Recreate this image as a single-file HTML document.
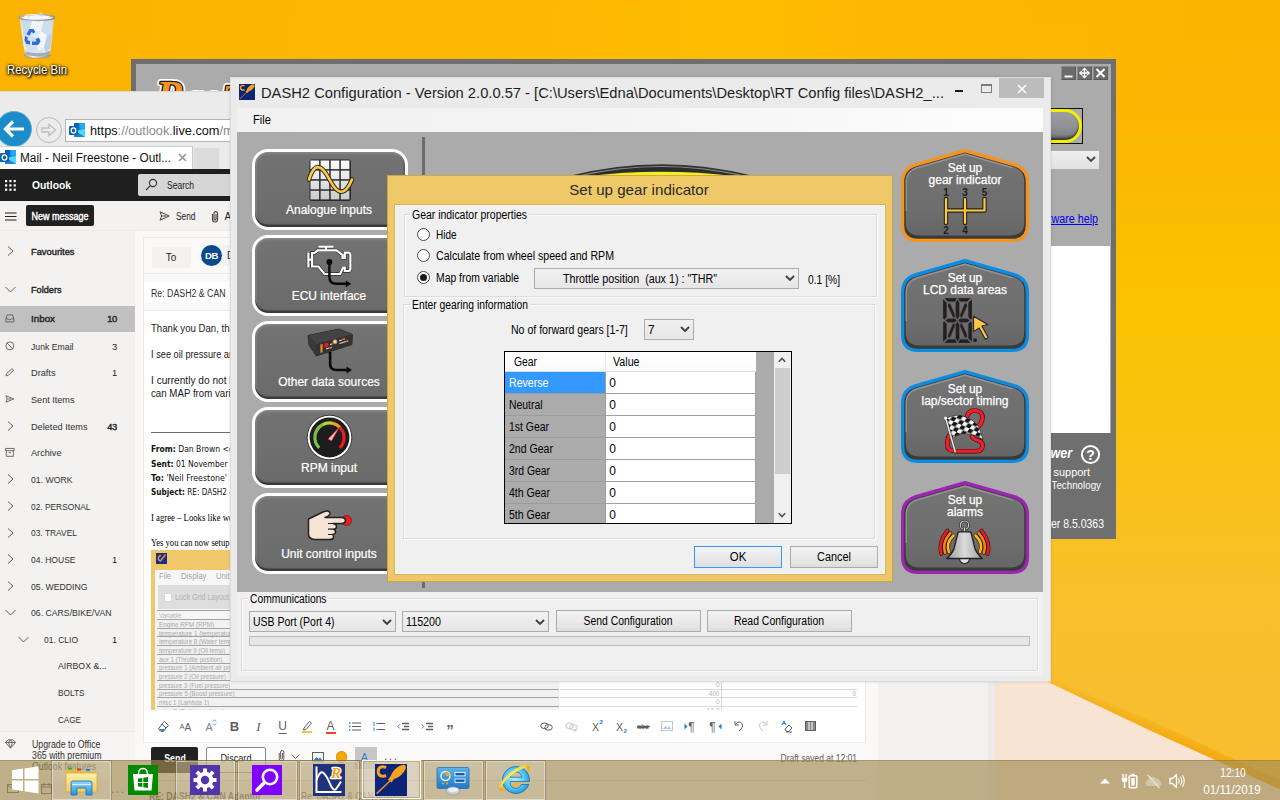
<!DOCTYPE html>
<html lang="en"><head><meta charset="utf-8"><title>Desktop</title>
<style>
*{box-sizing:border-box;margin:0;padding:0}
html,body{width:1280px;height:800px;overflow:hidden}
body{position:relative;font-family:"Liberation Sans",sans-serif;background:#fdb70a;font-size:12px}
.a{position:absolute}
.t{position:absolute;white-space:pre;line-height:1}
svg{position:absolute;overflow:visible}
.ser{font-family:"Liberation Serif",serif}
</style></head>
<body>

<svg style="left:0;top:0" width="1280" height="800" viewBox="0 0 1280 800">
<defs>
<linearGradient id="wg" x1="0" y1="0" x2="0" y2="800" gradientUnits="userSpaceOnUse">
<stop offset="0" stop-color="#fcb400"/><stop offset="0.12" stop-color="#fcb502"/><stop offset="0.38" stop-color="#fac200"/>
<stop offset="0.56" stop-color="#fac213"/><stop offset="0.75" stop-color="#f8c02b"/><stop offset="1" stop-color="#f7bd30"/>
</linearGradient>
<linearGradient id="wb" x1="1150" y1="718" x2="1145" y2="731" gradientUnits="userSpaceOnUse">
<stop offset="0" stop-color="#f7bb2c"/><stop offset="0.45" stop-color="#f5b21b"/><stop offset="1" stop-color="#f3a912"/>
</linearGradient>
<linearGradient id="wh" x1="0" y1="0" x2="1280" y2="0" gradientUnits="userSpaceOnUse">
<stop offset="0" stop-color="#f9af00" stop-opacity=".5"/><stop offset=".3" stop-color="#ffbe00" stop-opacity=".35"/><stop offset=".58" stop-color="#ffc000" stop-opacity=".7"/><stop offset=".85" stop-color="#ffbc00" stop-opacity=".2"/><stop offset="1" stop-color="#fbb400" stop-opacity="0"/>
</linearGradient>
</defs>
<rect width="1280" height="800" fill="url(#wg)"/>
<rect width="1280" height="95" fill="url(#wh)"/>
<polygon points="900,612.5 1050,677 1150,720 1236,760 1280,780.5 1280,789.5 1215,760 1150,730.6 1050,683 900,612.5" fill="url(#wb)"/>
<polygon points="900,612.5 1050,683 1150,730.6 1215,760 1280,789.5 1280,800 900,800" fill="#f7e4d2"/>
</svg>
<svg style="left:17px;top:9px" width="40" height="50" viewBox="0 0 40 50">
<defs><linearGradient id="rbm" x1="0" y1="0" x2="1" y2="0"><stop offset="0" stop-color="#9aa0a6"/><stop offset=".35" stop-color="#f4f6f8"/><stop offset=".6" stop-color="#c2c7cc"/><stop offset="1" stop-color="#8d9399"/></linearGradient>
<linearGradient id="rbg" x1="0" y1="0" x2="1" y2="0"><stop offset="0" stop-color="#e8c36a" stop-opacity=".75"/><stop offset=".12" stop-color="#dfe9f3" stop-opacity=".9"/><stop offset=".88" stop-color="#d5e2ef" stop-opacity=".9"/><stop offset="1" stop-color="#e8c36a" stop-opacity=".75"/></linearGradient></defs>
<ellipse cx="20.5" cy="46" rx="13" ry="3.3" fill="url(#rbm)" stroke="#8a9096" stroke-width=".6"/>
<path d="M2 8.5 L8 45.3 Q20.5 49.5 33.2 45.3 L37.8 8.5Z" fill="url(#rbg)"/>
<path d="M8.2 42 Q20.5 46.5 33 42 L33.2 45.3 Q20.5 49.5 8 45.3Z" fill="#9ea4aa" opacity=".85"/>
<path d="M4.5 10 L35.5 10 L33.5 38 L29 43.5 L11 43 L6.8 38Z" fill="#dde9f5"/>
<path d="M5 11 L15 12 L12 24 L6.5 30Z" fill="#c9daeb"/><path d="M15 12 L27 11 L24 22 L12 24Z" fill="#eef4fa"/><path d="M27 11 L35.5 10 L34.5 24 L30 27 L24 22Z" fill="#cfdff0"/>
<path d="M24 22 L30 27 L27 38 L21 42 L19 30Z" fill="#f3f7fb"/><path d="M30 27 L34.5 24 L33.5 38 L29 43.5 L27 38Z" fill="#bcd0e6"/><path d="M6.5 30 L12 24 L19 30 L21 42 L11 43 L6.8 38Z" fill="#d3e1f0"/>
<path d="M4.5 9 L7 7.5 L10 5.3 L13 7 L17 6.3 L22 5 L24.6 3.5 L26 6 L30 6.5 L34 8 L36 9.5 L20 11.5Z" fill="#f2f7fc"/>
<path d="M10 5.3 L13 7 L11.5 9.5Z M22 5 L24.6 3.5 L25 8Z" fill="#cfdcea"/>
<ellipse cx="19.9" cy="8.55" rx="17.9" ry="2.9" fill="none" stroke="url(#rbm)" stroke-width="1.4"/>
<path d="M2 8.5 A17.9 2.9 0 0 0 37.8 8.5" fill="none" stroke="#7d838a" stroke-width=".9" opacity=".8"/>
<g fill="#2f6ddb"><path d="M9.5 25 L12.5 20 L16.5 20 L18.5 23 L16 24.5 L14.8 22.8 L12.3 26.8Z"/><path d="M8.3 27 L11.3 28.7 L10 31 L13 32 L13 35.5 L9.3 35 L7.3 31Z"/><path d="M15 36 L15 32.5 L19.5 32.5 L18.5 30 L22 28.5 L23.5 32.5 L21 36Z"/></g>
<path d="M3.3 10 L9 44" stroke="#fff" stroke-width=".8" opacity=".55"/>
</svg><span class="t" id="t1" style="top:64.1px;font-size:12px;color:#fff;left:37px;transform:translateX(-50%) scaleX(0.947);text-shadow:1px 1px 2px #000,0 0 3px #000,0 1px 3px rgba(0,0,0,.9);letter-spacing:0px;">Recycle Bin</span><div class="a" style="left:131px;top:59px;width:985px;height:480px;background:#ababab;border:5px solid #6f6f6f;"></div><div class="a" style="left:136px;top:433px;width:975px;height:101px;background:#6f6f6f;"></div><div class="a" style="left:1040px;top:246px;width:70px;height:187px;background:#fff;"></div><svg style="left:150px;top:70px" width="90" height="50" viewBox="0 0 90 50"><g font-family="Liberation Serif,serif" font-style="italic" font-weight="bold" font-size="42"><text x="6" y="40" stroke="#fff" stroke-width="6" stroke-linejoin="round" fill="#fff">R</text><text x="6" y="40" stroke="#1a1a1a" stroke-width="2.6" stroke-linejoin="round" fill="#1a1a1a">R</text><text x="6" y="40" fill="#f7941d">R</text></g><g font-family="Liberation Serif,serif" font-style="italic" font-weight="bold" font-size="36"><text x="35" y="39.5" stroke="#fff" stroke-width="6" stroke-linejoin="round" fill="#fff">ace</text><text x="35" y="39.5" stroke="#1a1a1a" stroke-width="2.6" stroke-linejoin="round" fill="#1a1a1a">ace</text><text x="35" y="39.5" fill="#f7941d">ace</text></g><g font-family="Liberation Serif,serif" font-style="italic" font-weight="bold" font-size="42"><text x="72" y="44" stroke="#fff" stroke-width="6" stroke-linejoin="round" fill="#fff">T</text><text x="72" y="44" stroke="#1a1a1a" stroke-width="2.6" stroke-linejoin="round" fill="#1a1a1a">T</text><text x="72" y="44" fill="#f7941d">T</text></g></svg><div class="a" style="left:1061px;top:66px;width:15px;height:14px;background:#6b6b6b;border:1px solid #5a5a5a;border-top-color:#8a8a8a;border-left-color:#8a8a8a;"></div><div class="a" style="left:1077px;top:66px;width:15px;height:14px;background:#6b6b6b;border:1px solid #5a5a5a;border-top-color:#8a8a8a;border-left-color:#8a8a8a;"></div><div class="a" style="left:1093px;top:66px;width:15px;height:14px;background:#6b6b6b;border:1px solid #5a5a5a;border-top-color:#8a8a8a;border-left-color:#8a8a8a;"></div><svg style="left:1061px;top:66px" width="47" height="14" viewBox="0 0 47 14" fill="none" stroke="#fff" stroke-width="2">
<path d="M3.5 10.5 h8"/>
<path d="M23.5 2.5 v9 M19 7 h9" stroke-width="1.4"/><path d="M21.5 4.5 l2 -2.2 l2 2.2 M21.5 9.5 l2 2.2 l2 -2.2 M21 5 l-2.2 2 l2.2 2 M26 5 l2.2 2 l-2.2 2" stroke-width="1.2"/>
<path d="M35.5 3 l8 8 M43.5 3 l-8 8"/></svg><div class="a" style="left:1000px;top:108px;width:83px;height:36px;background:#ababab;border:1px solid #111;"></div><div class="a" style="left:980px;top:109px;width:101.5px;height:33.5px;border-radius:17px;border:3px solid #f5ee00;background:linear-gradient(#9b9da0,#8f9194 55%,#808285 80%,#55575a);box-shadow:inset 0 -2px 2px #3a3a3a;"></div><div class="a" style="left:1000px;top:150px;width:99.5px;height:19.5px;background:#e1e1e1;border:1px solid #adadad;background:linear-gradient(#efefef,#e2e2e2);"></div><svg style="left:1086px;top:156px" width="10" height="7" viewBox="0 0 10 7" fill="none" stroke="#444" stroke-width="1.8"><path d="M1 1 l4 4 l4 -4"/></svg><span class="t" id="t2" style="top:213.4px;font-size:12px;color:#0000ee;left:1097.8px;transform-origin:100% 50%;transform:translateX(-100%) scaleX(0.8937);text-decoration:underline;letter-spacing:0px;">Software help</span><span class="t" id="t3" style="top:446.3px;font-size:14px;color:#fff;left:1072px;transform-origin:100% 50%;transform:translateX(-100%) scaleX(0.8912);font-weight:bold;font-style:italic;letter-spacing:0px;">Power</span><svg style="left:1080px;top:444px" width="21" height="21" viewBox="0 0 21 21"><circle cx="10.5" cy="10.5" r="8.6" fill="none" stroke="#fff" stroke-width="2"/></svg><span class="t" id="t4" style="top:448.2px;font-size:14px;color:#fff;left:1090.5px;transform:translateX(-50%);font-weight:bold;">?</span><span class="t" id="t5" style="top:467.27px;font-size:10.5px;color:#fff;left:1089.5px;transform-origin:100% 50%;transform:translateX(-100%) scaleX(1.0419);letter-spacing:0px;">Technical support</span><span class="t" id="t6" style="top:480.27px;font-size:10.5px;color:#fff;left:1100.5px;transform-origin:100% 50%;transform:translateX(-100%) scaleX(0.9318);letter-spacing:0px;">Race Technology</span><span class="t" id="t7" style="top:518.38px;font-size:12.5px;color:#fff;left:1104px;transform-origin:100% 50%;transform:translateX(-100%) scaleX(0.8379);letter-spacing:0px;">Driver 8.5.0363</span><div class="a" style="left:-2px;top:91px;width:997px;height:712px;background:#ebebeb;border:1px solid #d8d8d8;"></div><div class="a" style="left:-4px;top:111px;width:36px;height:36px;background:#1b8bc9;border-radius:50%;border:1px solid #6da9cf;"></div><svg style="left:0;top:119px" width="28" height="20" viewBox="0 0 28 20" fill="none" stroke="#fff" stroke-width="3.2" stroke-linejoin="miter"><path d="M24 10 H6 M13 2.5 L5.5 10 L13 17.5"/></svg><div class="a" style="left:36px;top:117px;width:26px;height:26px;background:#ececec;border-radius:50%;border:1px solid #b9b9b9;"></div><svg style="left:41px;top:123px" width="16" height="14" viewBox="0 0 16 14" fill="none" stroke="#bdbdbd" stroke-width="1.3"><path d="M1 5 H8 V1.5 L14.5 7 L8 12.5 V9 H1Z"/></svg><div class="a" style="left:65px;top:119px;width:400px;height:23px;background:#fff;border:1px solid #b4b4b4;"></div><svg style="left:69px;top:122px" width="17" height="16" viewBox="0 0 17 16">
<rect x="5" y="1" width="11" height="11" fill="#1490df"/><rect x="5" y="1" width="5.5" height="5.5" fill="#0364b8"/><rect x="10.5" y="1" width="5.5" height="5.5" fill="#28a8ea"/><rect x="5" y="6.5" width="5.5" height="5.5" fill="#0078d4"/>
<path d="M5 9 L16 7 V15 H5Z" fill="#50d9ff"/><path d="M5 8 L16 15 H5Z" fill="#1a86d9"/>
<rect x="0" y="4" width="9" height="9" rx="1" fill="#0f5fb3"/>
<ellipse cx="4.5" cy="8.5" rx="2.3" ry="2.6" fill="none" stroke="#fff" stroke-width="1.3"/></svg><span class="t" id="t8" style="left:90.4px;top:124.88px;color:#111;font-size:12.5px;letter-spacing:0px;transform-origin:0 50%;transform:scaleX(1.0182);">https<span style="color:#8a8a8a">://outlook.</span>live.com<span style="color:#8a8a8a">/mail/0/inbox/id/AQMkADAwATE</span></span><div class="a" style="left:0px;top:145.5px;width:193px;height:23.5px;background:#fff;border-top:1px solid #d0d0d0;border-right:1px solid #c8c8c8;"></div><div class="a" style="left:193px;top:147px;width:27px;height:22px;background:#dcdcdc;border:1px solid #e8e8e8;border-bottom:none;"></div><svg style="left:0px;top:149px" width="17" height="16" viewBox="0 0 17 16">
<rect x="5" y="1" width="11" height="11" fill="#1490df"/><rect x="5" y="1" width="5.5" height="5.5" fill="#0364b8"/><rect x="10.5" y="1" width="5.5" height="5.5" fill="#28a8ea"/><rect x="5" y="6.5" width="5.5" height="5.5" fill="#0078d4"/>
<path d="M5 9 L16 7 V15 H5Z" fill="#50d9ff"/><path d="M5 8 L16 15 H5Z" fill="#1a86d9"/>
<rect x="0" y="4" width="9" height="9" rx="1" fill="#0f5fb3"/>
<ellipse cx="4.5" cy="8.5" rx="2.3" ry="2.6" fill="none" stroke="#fff" stroke-width="1.3"/></svg><span class="t" id="t9" style="top:151.97px;font-size:12.5px;color:#111;left:20px;transform-origin:0 50%;transform:scaleX(0.9451);letter-spacing:0px;">Mail - Neil Freestone - Outl...</span><svg style="left:178px;top:153px" width="9" height="9" viewBox="0 0 9 9" fill="none" stroke="#9a9a9a" stroke-width="1.7"><path d="M1 1 L8 8 M8 1 L1 8"/></svg><div class="a" style="left:0px;top:169px;width:988px;height:32px;background:#1f1f1f;"></div><svg style="left:4.5px;top:179.5px" width="11" height="11" viewBox="0 0 11 11" fill="#fff"><rect x="0" y="0" width="2.2" height="2.2"/><rect x="0" y="4.3" width="2.2" height="2.2"/><rect x="0" y="8.6" width="2.2" height="2.2"/><rect x="4.3" y="0" width="2.2" height="2.2"/><rect x="4.3" y="4.3" width="2.2" height="2.2"/><rect x="4.3" y="8.6" width="2.2" height="2.2"/><rect x="8.6" y="0" width="2.2" height="2.2"/><rect x="8.6" y="4.3" width="2.2" height="2.2"/><rect x="8.6" y="8.6" width="2.2" height="2.2"/></svg><span class="t" id="t10" style="top:180.28px;font-size:10.5px;color:#fff;left:31.5px;transform-origin:0 50%;transform:scaleX(0.9831);font-weight:bold;letter-spacing:0px;">Outlook</span><div class="a" style="left:138px;top:174px;width:300px;height:22px;background:#d6d6d6;border-radius:2px;"></div><svg style="left:145px;top:178px" width="13" height="13" viewBox="0 0 13 13" fill="none" stroke="#333" stroke-width="1.1"><circle cx="8" cy="5" r="3.6"/><path d="M5.4 7.6 L1 12"/></svg><span class="t" id="t11" style="top:180.5px;font-size:10px;color:#222;left:166.5px;transform-origin:0 50%;transform:scaleX(0.8521);letter-spacing:0px;">Search</span><div class="a" style="left:0px;top:201px;width:988px;height:30px;background:#f3f2f1;border-bottom:1px solid #edebe9;"></div><svg style="left:5px;top:212px" width="12" height="9" viewBox="0 0 12 9" fill="none" stroke="#222" stroke-width="1.2"><path d="M0 1 H11.5 M0 4.5 H11.5 M0 8 H11.5"/></svg><div class="a" style="left:26px;top:205px;width:68px;height:21px;background:#212121;border-radius:2px;"></div><span class="t" id="t12" style="top:212px;font-size:10px;color:#fff;left:60px;transform:translateX(-50%) scaleX(0.8996);-webkit-text-stroke:.4px currentColor;letter-spacing:0px;">New message</span><svg style="left:159px;top:211px" width="11" height="10" viewBox="0 0 11 10" fill="none" stroke="#444" stroke-width="1"><path d="M1 .8 L10.2 5 L1 9.2 L2.6 5Z M2.6 5 H7.5"/></svg><span class="t" id="t13" style="top:212px;font-size:10px;color:#222;left:175.8px;transform-origin:0 50%;transform:scaleX(0.8348);letter-spacing:0px;">Send</span><svg style="left:211px;top:210px" width="8" height="13" viewBox="0 0 8 13" fill="none" stroke="#444" stroke-width="1.1"><path d="M1.5 4 V9.5 A2.5 2.5 0 0 0 6.5 9.5 V3 A1.8 1.8 0 0 0 3 3 V9 A.8 .8 0 0 0 5 9 V4"/></svg><span class="t" id="t14" style="top:212px;font-size:10px;color:#222;left:224.5px;">Attach</span><div class="a" style="left:0px;top:231px;width:135px;height:600px;background:#f3f2f1;"></div><div class="a" style="left:135px;top:231px;width:853px;height:600px;background:#faf9f8;"></div><div class="a" style="left:0px;top:306px;width:135px;height:26px;background:#c0c0c0;"></div><span class="t" id="t15" style="top:246.97px;font-size:9.4px;color:#252423;left:31px;transform-origin:0 50%;transform:scaleX(0.9936);-webkit-text-stroke:.4px currentColor;letter-spacing:0px;">Favourites</span><svg style="left:6.5px;top:246.2px" width="7" height="10" viewBox="0 0 7 10" fill="none" stroke="#5f5d5b" stroke-width="1"><path d="M1 .5 L6 5 L1 9.5"/></svg><span class="t" id="t16" style="top:284.67px;font-size:9.4px;color:#252423;left:31px;transform-origin:0 50%;transform:scaleX(0.9755);-webkit-text-stroke:.4px currentColor;letter-spacing:0px;">Folders</span><svg style="left:4.5px;top:285.9px" width="11" height="7" viewBox="0 0 11 7" fill="none" stroke="#5f5d5b" stroke-width="1"><path d="M.5 1 L5.5 6 L10.5 1"/></svg><span class="t" id="t17" style="top:314.27px;font-size:9.4px;color:#252423;left:31px;transform-origin:0 50%;transform:scaleX(1.0463);-webkit-text-stroke:.4px currentColor;letter-spacing:0px;">Inbox</span><svg style="left:4.5px;top:314.1px" width="9.7" height="8.8" viewBox="0 0 11 10" fill="none" stroke="#5f5d5b" stroke-width="1"><path d="M1 5.5 L2.5 1 H8.5 L10 5.5 V9 H1Z M1 5.5 H3.5 Q5.5 8 7.5 5.5 H10"/></svg><span class="t" id="t18" style="top:314.27px;font-size:9.4px;color:#252423;left:117px;transform-origin:100% 50%;transform:translateX(-100%);letter-spacing:-0.3px;-webkit-text-stroke:.4px currentColor;">10</span><span class="t" id="t19" style="top:341.67px;font-size:9.4px;color:#323130;left:31px;transform-origin:0 50%;transform:scaleX(0.9267);letter-spacing:0px;">Junk Email</span><svg style="left:4.5px;top:341px" width="9.7" height="9.7" viewBox="0 0 11 11" fill="none" stroke="#5f5d5b" stroke-width="1"><circle cx="5.5" cy="5.5" r="4.5"/><path d="M2.3 2.3 L8.7 8.7"/></svg><span class="t" id="t20" style="top:341.67px;font-size:9.4px;color:#252423;left:117px;transform-origin:100% 50%;transform:translateX(-100%);letter-spacing:-0.3px;">3</span><span class="t" id="t21" style="top:368.27px;font-size:9.4px;color:#323130;left:31px;transform-origin:0 50%;transform:scaleX(0.9794);letter-spacing:0px;">Drafts</span><svg style="left:4.5px;top:368.1px" width="9.7" height="8.8" viewBox="0 0 11 10" fill="none" stroke="#5f5d5b" stroke-width="1"><path d="M1 9 L2 6 L8 .8 L10 2.6 L4 8Z"/></svg><span class="t" id="t22" style="top:368.27px;font-size:9.4px;color:#252423;left:117px;transform-origin:100% 50%;transform:translateX(-100%);letter-spacing:-0.3px;">1</span><span class="t" id="t23" style="top:395.07px;font-size:9.4px;color:#323130;left:31px;transform-origin:0 50%;transform:scaleX(0.9707);letter-spacing:0px;">Sent Items</span><svg style="left:4.5px;top:394.90000000000003px" width="9.7" height="7.9" viewBox="0 0 11 9" fill="none" stroke="#5f5d5b" stroke-width="1"><path d="M1 .8 L10 4.5 L1 8.2 L2.5 4.5Z M2.5 4.5 H7"/></svg><span class="t" id="t24" style="top:421.77px;font-size:9.4px;color:#323130;left:31px;transform-origin:0 50%;transform:scaleX(0.9785);letter-spacing:0px;">Deleted Items</span><svg style="left:6.5px;top:421px" width="7" height="10" viewBox="0 0 7 10" fill="none" stroke="#5f5d5b" stroke-width="1"><path d="M1 .5 L6 5 L1 9.5"/></svg><span class="t" id="t25" style="top:421.77px;font-size:9.4px;color:#252423;left:117px;transform-origin:100% 50%;transform:translateX(-100%);letter-spacing:-0.3px;-webkit-text-stroke:.4px currentColor;">43</span><span class="t" id="t26" style="top:448.37px;font-size:9.4px;color:#323130;left:31px;transform-origin:0 50%;transform:scaleX(0.9755);letter-spacing:0px;">Archive</span><svg style="left:4.5px;top:448.20000000000005px" width="9.7" height="8.8" viewBox="0 0 11 10" fill="none" stroke="#5f5d5b" stroke-width="1"><path d="M.5 .5 H10.5 V3 H.5Z M1.5 3 V9.5 H9.5 V3 M4 5 H7"/></svg><span class="t" id="t27" style="top:474.97px;font-size:9.4px;color:#323130;left:31px;transform-origin:0 50%;transform:scaleX(0.9261);letter-spacing:0px;">01. WORK</span><svg style="left:6.5px;top:474.2px" width="7" height="10" viewBox="0 0 7 10" fill="none" stroke="#5f5d5b" stroke-width="1"><path d="M1 .5 L6 5 L1 9.5"/></svg><span class="t" id="t28" style="top:501.67px;font-size:9.4px;color:#323130;left:31px;transform-origin:0 50%;transform:scaleX(0.892);letter-spacing:0px;">02. PERSONAL</span><svg style="left:6.5px;top:500.9px" width="7" height="10" viewBox="0 0 7 10" fill="none" stroke="#5f5d5b" stroke-width="1"><path d="M1 .5 L6 5 L1 9.5"/></svg><span class="t" id="t29" style="top:528.27px;font-size:9.4px;color:#323130;left:31px;transform-origin:0 50%;transform:scaleX(0.8976);letter-spacing:0px;">03. TRAVEL</span><svg style="left:6.5px;top:527.5px" width="7" height="10" viewBox="0 0 7 10" fill="none" stroke="#5f5d5b" stroke-width="1"><path d="M1 .5 L6 5 L1 9.5"/></svg><span class="t" id="t30" style="top:554.87px;font-size:9.4px;color:#323130;left:31px;transform-origin:0 50%;transform:scaleX(0.9085);letter-spacing:0px;">04. HOUSE</span><svg style="left:6.5px;top:554.1px" width="7" height="10" viewBox="0 0 7 10" fill="none" stroke="#5f5d5b" stroke-width="1"><path d="M1 .5 L6 5 L1 9.5"/></svg><span class="t" id="t31" style="top:554.87px;font-size:9.4px;color:#252423;left:117px;transform-origin:100% 50%;transform:translateX(-100%);letter-spacing:-0.3px;">1</span><span class="t" id="t32" style="top:581.57px;font-size:9.4px;color:#323130;left:31px;transform-origin:0 50%;transform:scaleX(0.9269);letter-spacing:0px;">05. WEDDING</span><svg style="left:6.5px;top:580.8px" width="7" height="10" viewBox="0 0 7 10" fill="none" stroke="#5f5d5b" stroke-width="1"><path d="M1 .5 L6 5 L1 9.5"/></svg><span class="t" id="t33" style="top:608.17px;font-size:9.4px;color:#323130;left:31px;transform-origin:0 50%;transform:scaleX(0.927);letter-spacing:0px;">06. CARS/BIKE/VAN</span><svg style="left:4.5px;top:609.4px" width="11" height="7" viewBox="0 0 11 7" fill="none" stroke="#5f5d5b" stroke-width="1"><path d="M.5 1 L5.5 6 L10.5 1"/></svg><span class="t" id="t34" style="top:634.87px;font-size:9.4px;color:#323130;left:44px;transform-origin:0 50%;transform:scaleX(0.9059);letter-spacing:0px;">01. CLIO</span><svg style="left:17.5px;top:636.1px" width="11" height="7" viewBox="0 0 11 7" fill="none" stroke="#5f5d5b" stroke-width="1"><path d="M.5 1 L5.5 6 L10.5 1"/></svg><span class="t" id="t35" style="top:634.87px;font-size:9.4px;color:#252423;left:117px;transform-origin:100% 50%;transform:translateX(-100%);letter-spacing:-0.3px;">1</span><span class="t" id="t36" style="top:661.47px;font-size:9.4px;color:#323130;left:57.5px;transform-origin:0 50%;transform:scaleX(0.9307);letter-spacing:0px;">AIRBOX &amp;...</span><span class="t" id="t37" style="top:688.07px;font-size:9.4px;color:#323130;left:57.5px;transform-origin:0 50%;transform:scaleX(0.882);letter-spacing:0px;">BOLTS</span><span class="t" id="t38" style="top:714.77px;font-size:9.4px;color:#323130;left:57.5px;transform-origin:0 50%;transform:scaleX(0.8654);letter-spacing:0px;">CAGE</span><div class="a" style="left:0px;top:731px;width:135px;height:80px;background:#f6f5f4;border-top:1px solid #edebe9;"></div><svg style="left:5px;top:739px" width="11" height="10" viewBox="0 0 11 10" fill="none" stroke="#5f5d5b" stroke-width=".9"><path d="M3 .8 H8 L10.5 3.5 L5.5 9.2 L.5 3.5Z M.5 3.5 H10.5 M3.5 3.5 L5.5 9 L7.5 3.5 L5.5 .8Z"/></svg><span class="t" id="t39" style="top:740px;font-size:10px;color:#323130;left:31.5px;transform-origin:0 50%;transform:scaleX(0.8759);letter-spacing:0px;">Upgrade to Office</span><span class="t" id="t40" style="top:751px;font-size:10px;color:#323130;left:31.5px;transform-origin:0 50%;transform:scaleX(0.8806);letter-spacing:0px;">365 with premium</span><span class="t" id="t41" style="top:762px;font-size:10px;color:#323130;left:31.5px;transform-origin:0 50%;transform:scaleX(0.8722);letter-spacing:0px;">Outlook features</span><svg style="left:7px;top:784px" width="12" height="9" viewBox="0 0 12 9" fill="none" stroke="#5f5d5b" stroke-width="1"><rect x=".5" y=".5" width="11" height="8"/><path d="M.5 1 L6 5 L11.5 1"/></svg><svg style="left:41px;top:783px" width="11" height="11" viewBox="0 0 11 11" fill="none" stroke="#5f5d5b" stroke-width="1"><rect x=".5" y="1.5" width="10" height="9"/><path d="M.5 4 H10.5 M3 0 V3 M8 0 V3"/></svg><span class="t" id="t42" style="top:782.6px;font-size:12px;color:#5f5d5b;left:111px;letter-spacing:1.5px;">...</span><div class="a" style="left:142.5px;top:236.5px;width:723px;height:506px;background:#fff;border:1px solid #edebe9;"></div><div class="a" style="left:143.5px;top:237.5px;width:721px;height:36.5px;background:#faf9f8;border-bottom:1px solid #edebe9;"></div><div class="a" style="left:151.5px;top:247px;width:39.5px;height:20.7px;background:#f3f2f1;border-radius:2px;"></div><span class="t" id="t43" style="top:253.1px;font-size:10px;color:#201f1e;left:171px;transform:translateX(-50%) scaleX(0.9941);letter-spacing:0px;">To</span><div class="a" style="left:201px;top:244.5px;width:110px;height:21px;background:#f3f2f1;border-radius:10.5px;"></div><div class="a" style="left:201px;top:244.5px;width:21px;height:21px;background:#0b4a8f;border-radius:50%;"></div><span class="t" id="t44" style="top:250.92px;font-size:9.5px;color:#fff;left:211.5px;transform:translateX(-50%);font-weight:bold;letter-spacing:-0.3px;">DB</span><span class="t" id="t45" style="top:250.7px;font-size:10px;color:#201f1e;left:227px;">Dan Brown</span><div class="a" style="left:143.5px;top:274px;width:721px;height:8px;background:#faf9f8;"></div><div class="a" style="left:143.5px;top:303px;width:721px;height:7.5px;background:#faf9f8;border-bottom:1px solid #edebe9;"></div><span class="t" id="t46" style="top:289.1px;font-size:10px;color:#323130;left:150.5px;transform-origin:0 50%;transform:scaleX(0.8773);letter-spacing:0px;">Re: DASH2 &amp; CAN</span><span class="t" id="t47" style="top:324.3px;font-size:10px;color:#1a1a1a;left:151px;transform-origin:0 50%;transform:scaleX(0.9606);letter-spacing:0px;">Thank you Dan, that is great news and very helpful.</span><span class="t" id="t48" style="top:350.3px;font-size:10px;color:#1a1a1a;left:151px;transform-origin:0 50%;transform:scaleX(0.9231);letter-spacing:0px;">I see oil pressure and oil temperature are now available.</span><span class="t" id="t49" style="top:376.2px;font-size:10px;color:#1a1a1a;left:151px;transform-origin:0 50%;transform:scaleX(1.0136);letter-spacing:0px;">I currently do not have a gear position sensor fitted but</span><span class="t" id="t50" style="top:389.3px;font-size:10px;color:#1a1a1a;left:151px;transform-origin:0 50%;transform:scaleX(0.9706);letter-spacing:0px;">can MAP from variable if required.</span><div class="a" style="left:151px;top:431.5px;width:640px;height:1px;background:#6a6a6a;"></div><span class="t" id="t51" style="left:151px;top:446px;color:#111;font-size:8px;font-family:'DejaVu Sans',sans-serif;letter-spacing:0px;transform-origin:0 50%;transform:scaleX(0.9569);"><b>From:</b> Dan Brown &lt;dan@</span><span class="t" id="t52" style="left:151px;top:460.7px;color:#111;font-size:8px;font-family:'DejaVu Sans',sans-serif;letter-spacing:0px;transform-origin:0 50%;transform:scaleX(0.9468);"><b>Sent:</b> 01 November 2019 11:40</span><span class="t" id="t53" style="left:151px;top:474.8px;color:#111;font-size:8px;font-family:'DejaVu Sans',sans-serif;letter-spacing:0px;transform-origin:0 50%;transform:scaleX(0.9856);"><b>To:</b> 'Neil Freestone'</span><span class="t" id="t54" style="left:151px;top:489px;color:#111;font-size:8px;font-family:'DejaVu Sans',sans-serif;letter-spacing:0px;transform-origin:0 50%;transform:scaleX(0.9134);"><b>Subject:</b> RE: DASH2 &amp; CAN Adaptor</span><span class="t" id="t55" style="top:512.98px;font-size:9.6px;color:#000;left:151px;transform-origin:0 50%;transform:scaleX(0.9063);font-family:'Liberation Serif',serif;letter-spacing:0px;">I agree – Looks like we have a working solution.</span><span class="t" id="t56" style="top:537.68px;font-size:9.6px;color:#000;left:151px;transform-origin:0 50%;transform:scaleX(0.8917);font-family:'Liberation Serif',serif;letter-spacing:0px;">Yes you can now setup the gear indicator as below.</span><div class="a" style="left:151px;top:549.7px;width:706px;height:160px;overflow:hidden;background:#f0c869"><div class="a" style="left:4px;top:20.5px;width:702px;height:140px;background:#f7f7f7"></div><div class="a" style="left:6.5px;top:35.5px;width:700px;height:24px;background:#dedede"></div><div class="a" style="left:12.7px;top:43.5px;width:8.5px;height:8.5px;background:#fdfdfd;border:1px solid #d6d6d6"></div><div class="a" style="left:5px;top:3.5px;width:11px;height:11px;background:#1b2f86"></div><svg style="left:5px;top:3.5px" width="11" height="11" viewBox="0 0 11 11" fill="none" stroke="#d9a13a" stroke-width="1.3"><path d="M5 2.5 A2.6 2.6 0 1 0 5 7.8 M9.5 1.5 L4 8.5"/></svg><div class="a" style="left:6px;top:60.7px;width:700px;height:8.7px;background:#f6f6f6;border-top:1px solid #a2a2a2"></div><div class="a" style="left:6px;top:69.4px;width:402px;height:8.7px;background:#f1f1f1;border-top:1px solid #a2a2a2"></div><div class="a" style="left:408.5px;top:69.4px;width:297px;height:8.7px;background:#fff;border-top:1px solid #d9d9d9"></div><div class="a" style="left:6px;top:78.1px;width:402px;height:8.7px;background:#f1f1f1;border-top:1px solid #a2a2a2"></div><div class="a" style="left:408.5px;top:78.1px;width:297px;height:8.7px;background:#fff;border-top:1px solid #d9d9d9"></div><div class="a" style="left:6px;top:86.8px;width:402px;height:8.7px;background:#f1f1f1;border-top:1px solid #a2a2a2"></div><div class="a" style="left:408.5px;top:86.8px;width:297px;height:8.7px;background:#fff;border-top:1px solid #d9d9d9"></div><div class="a" style="left:6px;top:95.5px;width:402px;height:8.7px;background:#f1f1f1;border-top:1px solid #a2a2a2"></div><div class="a" style="left:408.5px;top:95.5px;width:297px;height:8.7px;background:#fff;border-top:1px solid #d9d9d9"></div><div class="a" style="left:6px;top:104.2px;width:402px;height:8.7px;background:#f1f1f1;border-top:1px solid #a2a2a2"></div><div class="a" style="left:408.5px;top:104.2px;width:297px;height:8.7px;background:#fff;border-top:1px solid #d9d9d9"></div><div class="a" style="left:6px;top:112.9px;width:402px;height:8.7px;background:#f1f1f1;border-top:1px solid #a2a2a2"></div><div class="a" style="left:408.5px;top:112.9px;width:297px;height:8.7px;background:#fff;border-top:1px solid #d9d9d9"></div><div class="a" style="left:6px;top:121.6px;width:402px;height:8.7px;background:#f1f1f1;border-top:1px solid #a2a2a2"></div><div class="a" style="left:408.5px;top:121.6px;width:297px;height:8.7px;background:#fff;border-top:1px solid #d9d9d9"></div><div class="a" style="left:6px;top:130.3px;width:402px;height:8.7px;background:#f1f1f1;border-top:1px solid #a2a2a2"></div><div class="a" style="left:408.5px;top:130.3px;width:297px;height:8.7px;background:#fff;border-top:1px solid #d9d9d9"></div><div class="a" style="left:6px;top:139px;width:402px;height:8.7px;background:#f1f1f1;border-top:1px solid #a2a2a2"></div><div class="a" style="left:408.5px;top:139px;width:297px;height:8.7px;background:#fff;border-top:1px solid #d9d9d9"></div><div class="a" style="left:6px;top:147.7px;width:402px;height:8.7px;background:#f1f1f1;border-top:1px solid #a2a2a2"></div><div class="a" style="left:408.5px;top:147.7px;width:297px;height:8.7px;background:#fff;border-top:1px solid #d9d9d9"></div><div class="a" style="left:6px;top:156.4px;width:402px;height:8.7px;background:#f1f1f1;border-top:1px solid #a2a2a2"></div><div class="a" style="left:408.5px;top:156.4px;width:297px;height:8.7px;background:#fff;border-top:1px solid #d9d9d9"></div><div class="a" style="left:569.5px;top:74px;width:1px;height:90px;background:#d5d5d5"></div></div><span class="t" id="t57" style="top:572.47px;font-size:8.5px;color:#a3a3ad;left:159px;transform-origin:0 50%;transform:scaleX(0.8757);letter-spacing:0px;">File</span><span class="t" id="t58" style="top:572.47px;font-size:8.5px;color:#a3a3ad;left:181px;transform-origin:0 50%;transform:scaleX(0.9148);letter-spacing:0px;">Display</span><span class="t" id="t59" style="top:572.47px;font-size:8.5px;color:#a3a3ad;left:215.5px;transform-origin:0 50%;transform:scaleX(0.8926);letter-spacing:0px;">Unit</span><span class="t" id="t60" style="top:593.47px;font-size:8.5px;color:#b2b2b2;left:174.5px;transform-origin:0 50%;transform:scaleX(0.8403);letter-spacing:0px;">Lock Grid Layout</span><span class="t" id="t61" style="top:612.15px;font-size:7px;color:#b4b4b4;left:159px;transform-origin:0 50%;transform:scaleX(0.8939);letter-spacing:0px;">Variable</span><span class="t" id="t62" style="top:620.85px;font-size:7px;color:#a9a9a9;left:159px;transform-origin:0 50%;transform:scaleX(0.8948);letter-spacing:0px;">Engine RPM (RPM)</span><span class="t" id="t63" style="top:629.55px;font-size:7px;color:#a9a9a9;left:159px;transform-origin:0 50%;transform:scaleX(0.8819);letter-spacing:0px;">temperature 1 (temperature 1)</span><span class="t" id="t64" style="top:638.25px;font-size:7px;color:#a9a9a9;left:159px;transform-origin:0 50%;transform:scaleX(0.8762);letter-spacing:0px;">temperature 8 (Water temp)</span><span class="t" id="t65" style="top:646.95px;font-size:7px;color:#a9a9a9;left:159px;transform-origin:0 50%;transform:scaleX(0.8656);letter-spacing:0px;">temperature 9 (Oil temp)</span><span class="t" id="t66" style="top:655.65px;font-size:7px;color:#a9a9a9;left:159px;transform-origin:0 50%;transform:scaleX(0.8634);letter-spacing:0px;">aux 1 (Throttle position)</span><span class="t" id="t67" style="top:664.35px;font-size:7px;color:#a9a9a9;left:159px;transform-origin:0 50%;transform:scaleX(0.865);letter-spacing:0px;">pressure 1 (Ambient air pressure)</span><span class="t" id="t68" style="top:673.05px;font-size:7px;color:#a9a9a9;left:159px;transform-origin:0 50%;transform:scaleX(0.8654);letter-spacing:0px;">pressure 2 (Oil pressure)</span><span class="t" id="t69" style="top:681.75px;font-size:7px;color:#a9a9a9;left:159px;transform-origin:0 50%;transform:scaleX(0.8608);letter-spacing:0px;">pressure 3 (Fuel pressure)</span><span class="t" id="t70" style="top:690.45px;font-size:7px;color:#a9a9a9;left:159px;transform-origin:0 50%;transform:scaleX(0.8702);letter-spacing:0px;">pressure 5 (Boost pressure)</span><span class="t" id="t71" style="top:699.15px;font-size:7px;color:#a9a9a9;left:159px;transform-origin:0 50%;transform:scaleX(0.8625);letter-spacing:0px;">misc 1 (Lambda 1)</span><span class="t" id="t72" style="top:707.85px;font-size:7px;color:#a9a9a9;left:159px;transform-origin:0 50%;transform:scaleX(0.884);letter-spacing:0px;">misc 2 (Battery voltage)</span><span class="t" id="t73" style="top:681.98px;font-size:6.5px;color:#b5b5b5;left:719.5px;transform-origin:100% 50%;transform:translateX(-100%);">0</span><span class="t" id="t74" style="top:690.67px;font-size:6.5px;color:#b5b5b5;left:719.5px;transform-origin:100% 50%;transform:translateX(-100%);">400</span><span class="t" id="t75" style="top:699.38px;font-size:6.5px;color:#b5b5b5;left:719.5px;transform-origin:100% 50%;transform:translateX(-100%);">0</span><span class="t" id="t76" style="top:708.08px;font-size:6.5px;color:#b5b5b5;left:719.5px;transform-origin:100% 50%;transform:translateX(-100%);">13.8</span><span class="t" id="t77" style="top:690.67px;font-size:6.5px;color:#9fb3cf;left:856px;transform-origin:100% 50%;transform:translateX(-100%);">0</span><div class="a" style="left:143.5px;top:710px;width:721px;height:32px;background:#fff;"></div><svg style="left:157px;top:719.5px" width="13" height="13" viewBox="0 0 13 13" fill="none" stroke="#605e5c" stroke-width="1"><path d="M7.5 1.5 L11.5 5.5 L9 8 L5 4Z M5 4 L1.5 9 Q3 12 6.5 11.5 L9 8" /><path d="M2 9 Q3.5 11.5 6.5 11 L8 9Z" fill="#2b7cd3" stroke="none"/></svg><span class="t" id="t78" style="top:723.12px;font-size:7.5px;color:#605e5c;left:179.5px;">A</span><span class="t" id="t79" style="top:722.5px;font-size:10px;color:#605e5c;left:184.5px;">A</span><span class="t" id="t80" style="top:721.55px;font-size:11px;color:#8a8886;left:205.5px;">A</span><svg style="left:212px;top:718.5px" width="5" height="7" viewBox="0 0 5 7" fill="none" stroke="#2b7cd3" stroke-width="0.8"><path d="M.8 2.6 L2.5 .8 L4.2 2.6 M.8 4.4 L2.5 6.2 L4.2 4.4"/></svg><span class="t" id="t81" style="top:720.15px;font-size:13px;color:#605e5c;left:234.5px;transform:translateX(-50%);font-weight:bold;">B</span><span class="t" id="t82" style="top:720.15px;font-size:13px;color:#605e5c;left:258.5px;transform:translateX(-50%);font-family:'Liberation Serif',serif;font-style:italic;">I</span><span class="t" id="t83" style="top:720.1px;font-size:12px;color:#605e5c;left:282.5px;transform:translateX(-50%);border-bottom:1px solid #605e5c;padding-bottom:0.5px;">U</span><svg style="left:300.5px;top:719.5px" width="12" height="13" viewBox="0 0 12 13" fill="none" stroke="#605e5c" stroke-width="1"><path d="M3 8 L8.5 1.5 L10.5 3.2 L5 9.5 L2.5 10Z"/><path d="M1 12 H11" stroke="#f2b01e" stroke-width="1.6"/></svg><span class="t" id="t84" style="top:719.6px;font-size:12px;color:#605e5c;left:330.5px;transform:translateX(-50%);">A</span><div class="a" style="left:325.5px;top:732px;width:10px;height:1.6px;background:#e8412c;"></div><svg style="left:348.5px;top:721.5px" width="12" height="9" viewBox="0 0 12 9" fill="none" stroke="#605e5c" stroke-width="1"><path d="M3 1 H12 M3 4.5 H12 M3 8 H12" stroke-width="1.1"/><path d="M0 1 H1.5 M0 4.5 H1.5 M0 8 H1.5" stroke="#2b7cd3" stroke-width="1.3"/></svg><svg style="left:372.5px;top:721.5px" width="12" height="9" viewBox="0 0 12 9" fill="none" stroke="#605e5c" stroke-width="1"><path d="M3.5 1.5 H12 M3.5 7.5 H12" stroke-width="1.1"/><path d="M1 0 V4 M1 5.5 V9" stroke="#2b7cd3" stroke-width="1"/></svg><svg style="left:396.5px;top:721.5px" width="12" height="9" viewBox="0 0 12 9" fill="none" stroke="#605e5c" stroke-width="1"><path d="M5 1.5 H12 M7 4.5 H12 M5 7.5 H12" stroke-width="1.3"/><path d="M2.8 2.5 L.8 4.5 L2.8 6.5" stroke="#2b7cd3"/></svg><svg style="left:421px;top:721.5px" width="12" height="9" viewBox="0 0 12 9" fill="none" stroke="#605e5c" stroke-width="1"><path d="M5 1.5 H12 M7 4.5 H12 M5 7.5 H12" stroke-width="1.3"/><path d="M.8 2.5 L2.8 4.5 L.8 6.5" stroke="#2b7cd3"/></svg><span class="t" id="t85" style="top:721.75px;font-size:15px;color:#605e5c;left:450px;transform:translateX(-50%);font-weight:bold;">”</span><svg style="left:540px;top:721.5px" width="13" height="9" viewBox="0 0 13 9" fill="none" stroke="#605e5c" stroke-width="1"><ellipse cx="4.5" cy="3.8" rx="3.8" ry="2.8"/><ellipse cx="8.5" cy="5.4" rx="3.8" ry="2.8"/></svg><svg style="left:564.5px;top:721.5px" width="13" height="9" viewBox="0 0 13 9" fill="none" stroke="#c8c6c4" stroke-width="1"><ellipse cx="4.5" cy="3.8" rx="3.8" ry="2.8"/><ellipse cx="8.5" cy="5.4" rx="3.8" ry="2.8"/></svg><span class="t" id="t86" style="top:727.3px;font-size:6px;color:#e9a3a0;left:574px;">x</span><span class="t" id="t87" style="top:721.77px;font-size:10.5px;color:#605e5c;left:592px;">X</span><span class="t" id="t88" style="top:719.3px;font-size:6px;color:#2b7cd3;left:599.5px;font-weight:bold;">2</span><span class="t" id="t89" style="top:721.77px;font-size:10.5px;color:#605e5c;left:616px;">X</span><span class="t" id="t90" style="top:727.8px;font-size:6px;color:#2b7cd3;left:623.5px;font-weight:bold;">2</span><span class="t" id="t91" style="top:722.85px;font-size:7px;color:#605e5c;left:643px;transform:translateX(-50%);text-decoration:line-through;">abc</span><div class="a" style="left:636.5px;top:725.7px;width:13px;height:1px;background:#605e5c;"></div><svg style="left:660.5px;top:721px" width="12" height="10" viewBox="0 0 12 10" fill="none" stroke="#c8c6c4" stroke-width="1"><rect x=".5" y=".5" width="11" height="9"/><path d="M1.5 8 L4.5 5 L6.5 7 L8 5.5 L10.5 8Z" fill="#a6c8ec" stroke="none"/></svg><span class="t" id="t92" style="top:720.6px;font-size:12px;color:#605e5c;left:691.5px;transform:translateX(-50%);">¶</span><svg style="left:684px;top:722.5px" width="4" height="7" viewBox="0 0 4 7" fill="none" stroke="#605e5c" stroke-width="1"><path d="M.5 .5 L3.5 3.5 L.5 6.5Z" fill="#2b7cd3" stroke="none"/></svg><span class="t" id="t93" style="top:720.6px;font-size:12px;color:#605e5c;left:712.5px;transform:translateX(-50%);">¶</span><svg style="left:718px;top:722.5px" width="4" height="7" viewBox="0 0 4 7" fill="none" stroke="#605e5c" stroke-width="1"><path d="M3.5 .5 L.5 3.5 L3.5 6.5Z" fill="#2b7cd3" stroke="none"/></svg><svg style="left:733.5px;top:720px" width="10" height="12" viewBox="0 0 10 12" fill="none" stroke="#605e5c" stroke-width="1"><path d="M1 1 V5 H5 M1.5 4.5 Q5 0 8 3.5 Q10 7 5 11"/></svg><svg style="left:757.5px;top:720px" width="10" height="12" viewBox="0 0 10 12" fill="none" stroke="#c8c6c4" stroke-width="1"><path d="M9 1 V5 H5 M8.5 4.5 Q5 0 2 3.5 Q0 7 5 11"/></svg><svg style="left:780.5px;top:719.5px" width="12" height="13" viewBox="0 0 12 13" fill="none" stroke="#605e5c" stroke-width="1"><path d="M4 9 L8 5 L11 8 L8 11.5 H5.5Z M5 12 H11"/><path d="M1 5 L3 .8 L5 5 M1.8 3.5 H4.2" stroke="#2b7cd3"/></svg><svg style="left:805px;top:721px" width="11" height="10" viewBox="0 0 11 10" fill="none" stroke="#605e5c" stroke-width="1"><rect x=".5" y=".5" width="10" height="9" fill="#8a8886"/><path d="M4 1 V9 M7 1 V9" stroke="#fff"/></svg><div class="a" style="left:151px;top:747px;width:47px;height:26px;background:#212121;border-radius:2px;"></div><span class="t" id="t94" style="top:753.27px;font-size:10.5px;color:#fff;left:174.5px;transform:translateX(-50%) scaleX(0.8375);font-weight:bold;letter-spacing:0px;">Send</span><div class="a" style="left:206px;top:747px;width:59.5px;height:26px;background:#fff;border:1px solid #8a8886;border-radius:2px;"></div><span class="t" id="t95" style="top:753.27px;font-size:10.5px;color:#201f1e;left:235.8px;transform:translateX(-50%) scaleX(0.8709);letter-spacing:0px;">Discard</span><svg style="left:278px;top:749px" width="7" height="13" viewBox="0 0 7 13" fill="none" stroke="#605e5c" stroke-width="1"><path d="M1.2 4 V9.5 A2.3 2.3 0 0 0 5.8 9.5 V3 A1.6 1.6 0 0 0 2.6 3 V9 A.7 .7 0 0 0 4.4 9 V4"/></svg><svg style="left:290.5px;top:754px" width="9" height="6" viewBox="0 0 9 6" fill="none" stroke="#605e5c" stroke-width="1"><path d="M.5 .5 L4.5 4.5 L8.5 .5"/></svg><svg style="left:311.5px;top:751.5px" width="12" height="10" viewBox="0 0 12 10" fill="none" stroke="#605e5c" stroke-width="1"><rect x=".5" y=".5" width="11" height="9"/><path d="M1.5 8.5 L4.5 5 L6.5 7 L8 5.5 L10.5 8.5Z" fill="#2b7cd3" stroke="none"/></svg><div class="a" style="left:335.5px;top:751px;width:11.5px;height:11.5px;background:#f8a800;border-radius:50%;border:1px solid #d98f00;"></div><div class="a" style="left:355px;top:747px;width:22px;height:22px;background:#c8c6c4;"></div><span class="t" id="t96" style="top:752.5px;font-size:10px;color:#2b7cd3;left:361px;">A</span><span class="t" id="t97" style="top:749.6px;font-size:12px;color:#605e5c;left:384px;letter-spacing:1.5px;">...</span><span class="t" id="t98" style="top:753.8px;font-size:10px;color:#605e5c;left:856.5px;transform-origin:100% 50%;transform:translateX(-100%) scaleX(0.8494);letter-spacing:0px;">Draft saved at 12:01</span><div class="a" style="left:143px;top:779.5px;width:735px;height:1px;background:#e1dfdd;"></div><span class="t" id="t99" style="top:791.27px;font-size:10.5px;color:#605e5c;left:149px;transform-origin:0 50%;transform:scaleX(0.8264);font-weight:bold;letter-spacing:0px;">RE: DASH2 &amp; CAN Adaptor</span><span class="t" id="t100" style="top:791.27px;font-size:10.5px;color:#605e5c;left:301px;transform-origin:0 50%;transform:scaleX(0.81);letter-spacing:0px;">Re: DASH2 &amp; CAN Adaptor</span><div class="a" style="left:865.5px;top:231px;width:12.5px;height:600px;background:#faf9f8;"></div><div class="a" style="left:878px;top:231px;width:110px;height:600px;background:#f3f2f1;"></div><div class="a" style="left:988px;top:169px;width:7px;height:640px;background:#ebebeb;"></div><div class="a" style="left:230px;top:77px;width:821px;height:605px;background:#ebebeb;border:1px solid #dcdcdc;box-shadow:0 0 3px rgba(0,0,0,.12);"></div><svg style="left:239px;top:84px" width="16" height="16" viewBox="0 0 16 16">
<rect width="16" height="16" fill="#0b2478"/>
<path d="M5.6 1.7 Q1.6 .6 1.6 3.8 Q1.6 6.8 5.6 5.9" fill="none" stroke="#f7a11d" stroke-width="1.5"/>
<ellipse cx="11.7" cy="3.9" rx="4.7" ry="2.1" transform="rotate(-42 11.7 3.9)" fill="#f7a11d"/>
<path d="M9 6.3 L7.4 8.6" stroke="#f7a11d" stroke-width="2.2"/>
<path d="M8 8 L.8 14.8" stroke="#d98f2a" stroke-width=".8"/></svg><span class="t" id="t101" style="top:84.65px;font-size:15px;color:#1e1e1e;left:260.5px;transform-origin:0 50%;transform:scaleX(0.9807);letter-spacing:0px;">DASH2 Configuration - Version 2.0.0.57 - [C:\Users\Edna\Documents\Desktop\RT Config files\DASH2_...</span><div class="a" style="left:955px;top:90px;width:8px;height:2px;background:#1a1a1a;"></div><div class="a" style="left:981px;top:84px;width:10.5px;height:8.5px;border:1px solid #7a7a7a;border-top-width:2px;"></div><div class="a" style="left:999px;top:78px;width:45px;height:20px;background:#bcbcbc;"></div><svg style="left:1017px;top:84px" width="10" height="10" viewBox="0 0 10 10" fill="none" stroke="#fff" stroke-width="1.5"><path d="M1 1 L9 9 M9 1 L1 9"/></svg><div class="a" style="left:237px;top:108px;width:806px;height:23.5px;background:linear-gradient(90deg,#f1f1f1 0%,#f3f3f3 40%,#fdfdfd 100%);"></div><span class="t" id="t102" style="top:113.9px;font-size:12px;color:#000;left:252.5px;transform-origin:0 50%;transform:scaleX(0.9305);letter-spacing:0px;">File</span><div class="a" style="left:237px;top:131.5px;width:806px;height:460.5px;background:#ababab;"></div><div class="a" style="left:237px;top:592px;width:806px;height:83.5px;background:#f0f0f0;"></div><div class="a" style="left:422px;top:137px;width:3px;height:451px;background:#6c6c6c;"></div><svg style="left:560px;top:160px" width="200" height="20" viewBox="0 0 200 20">
<path d="M9 16 Q101 -7.5 194 16 Z" fill="#333"/><path d="M16 16 Q101 -4.2 187 16 Z" fill="#8a8a8a"/>
<path d="M21 16 Q101 -2.2 182 16 Z" fill="#2c2c2c"/>
<path d="M28 16 Q101 7.5 175 16 Z" fill="#f5ee1a"/></svg><div class="a" style="left:251.5px;top:149px;width:156px;height:80.5px;border:3px solid #fff;border-radius:16px;background:linear-gradient(#737373,#6e6e6e 60%,#6a6a6a);box-shadow:inset 0 -2.5px 1px #3a3a3a,inset 0 2px 2px #858585,inset -1.5px 0 1px #555,inset 1.5px 0 1px #888;"></div><span class="t" id="t103" style="top:204.4px;font-size:12px;color:#fff;left:329.3px;transform:translateX(-50%) scaleX(0.9991);-webkit-text-stroke:.2px #fff;letter-spacing:0px;">Analogue inputs</span><svg style="left:308.5px;top:158.5px" width="43" height="43" viewBox="0 0 43 43">
<defs><linearGradient id="gcell" x1="0" y1="0" x2="0" y2="43" gradientUnits="userSpaceOnUse"><stop offset="0" stop-color="#fff"/><stop offset="1" stop-color="#c9c9c9"/></linearGradient></defs>
<rect x=".5" y=".5" width="41.5" height="41.5" rx="2.5" fill="#2a2a2a"/><rect x="1.5" y="1.5" width="8.6" height="8.6" fill="url(#gcell)"/><rect x="1.5" y="11.6" width="8.6" height="8.6" fill="url(#gcell)"/><rect x="1.5" y="21.7" width="8.6" height="8.6" fill="url(#gcell)"/><rect x="1.5" y="31.8" width="8.6" height="8.6" fill="url(#gcell)"/><rect x="11.6" y="1.5" width="8.6" height="8.6" fill="url(#gcell)"/><rect x="11.6" y="11.6" width="8.6" height="8.6" fill="url(#gcell)"/><rect x="11.6" y="21.7" width="8.6" height="8.6" fill="url(#gcell)"/><rect x="11.6" y="31.8" width="8.6" height="8.6" fill="url(#gcell)"/><rect x="21.7" y="1.5" width="8.6" height="8.6" fill="url(#gcell)"/><rect x="21.7" y="11.6" width="8.6" height="8.6" fill="url(#gcell)"/><rect x="21.7" y="21.7" width="8.6" height="8.6" fill="url(#gcell)"/><rect x="21.7" y="31.8" width="8.6" height="8.6" fill="url(#gcell)"/><rect x="31.8" y="1.5" width="8.6" height="8.6" fill="url(#gcell)"/><rect x="31.8" y="11.6" width="8.6" height="8.6" fill="url(#gcell)"/><rect x="31.8" y="21.7" width="8.6" height="8.6" fill="url(#gcell)"/><rect x="31.8" y="31.8" width="8.6" height="8.6" fill="url(#gcell)"/>
<path d="M0 20.5 C5 4,12 4,20.5 20.5 S36 37,43 20.5" fill="none" stroke="#2a2a2a" stroke-width="4.6" stroke-linecap="round"/>
<path d="M0 20.5 C5 4,12 4,20.5 20.5 S36 37,43 20.5" fill="none" stroke="#ffcb3d" stroke-width="2.6" stroke-linecap="round"/></svg><div class="a" style="left:251.5px;top:235px;width:156px;height:80.5px;border:3px solid #fff;border-radius:16px;background:linear-gradient(#737373,#6e6e6e 60%,#6a6a6a);box-shadow:inset 0 -2.5px 1px #3a3a3a,inset 0 2px 2px #858585,inset -1.5px 0 1px #555,inset 1.5px 0 1px #888;"></div><span class="t" id="t104" style="top:290.4px;font-size:12px;color:#fff;left:329.3px;transform:translateX(-50%) scaleX(0.9973);-webkit-text-stroke:.2px #fff;letter-spacing:0px;">ECU interface</span><svg style="left:306px;top:244px" width="48" height="46" viewBox="0 0 48 46">
<path d="M11.8 6.4 H30.5 L36.5 11 V13.9 H38.8 V8.6 H42.5 Q44.4 8.6 44.4 11 V24.5 Q44.4 27 42.5 27 H38.8 V23.6 H37 L34.2 30 H18.5 L12.5 22.5 H6.1 V9 H8.5 Z M12.5 2.6 H27.5 M20 2.6 V6.4 M2.4 8.6 V23.2 M2.4 15.7 H6.1" fill="none" stroke="#2a2a2a" stroke-width="3.3" stroke-linejoin="miter"/>
<path d="M11.8 6.4 H30.5 L36.5 11 V13.9 H38.8 V8.6 H42.5 Q44.4 8.6 44.4 11 V24.5 Q44.4 27 42.5 27 H38.8 V23.6 H37 L34.2 30 H18.5 L12.5 22.5 H6.1 V9 H8.5 Z M12.5 2.6 H27.5 M20 2.6 V6.4 M2.4 8.6 V23.2 M2.4 15.7 H6.1" fill="none" stroke="#fff" stroke-width="2.2" stroke-linejoin="miter"/>
<circle cx="23.4" cy="17.9" r="3" fill="#0a0a0a"/>
<path d="M23.4 18 V33 Q23.4 39.8 30.5 39.8 H40.5" fill="none" stroke="#0a0a0a" stroke-width="2.4"/>
<path d="M39.8 36.4 L45.2 39.8 L39.8 43.2Z" fill="#0a0a0a"/></svg><div class="a" style="left:251.5px;top:321px;width:156px;height:80.5px;border:3px solid #fff;border-radius:16px;background:linear-gradient(#737373,#6e6e6e 60%,#6a6a6a);box-shadow:inset 0 -2.5px 1px #3a3a3a,inset 0 2px 2px #858585,inset -1.5px 0 1px #555,inset 1.5px 0 1px #888;"></div><span class="t" id="t105" style="top:376.4px;font-size:12px;color:#fff;left:329.3px;transform:translateX(-50%) scaleX(0.9945);-webkit-text-stroke:.2px #fff;letter-spacing:0px;">Other data sources</span><svg style="left:306px;top:327px" width="48" height="48" viewBox="0 0 48 48">
<path d="M2 8.5 L32.8 2.1 L46.3 7.4 L45.9 17.5 L10.3 28.8 L3.1 18.3Z" fill="#2e2e2e" stroke="#262626" stroke-width="1" stroke-linejoin="round"/>
<path d="M2 8.5 L32.8 2.1 L46.3 7.4 L10.5 17.3Z" fill="#434343"/>
<path d="M10.5 17.3 L46.3 7.4 L45.9 17.5 L10.3 28.8Z" fill="#333"/>
<path d="M2 8.5 L10.5 17.3 L10.3 28.8 L3.1 18.3Z" fill="#3a3a3a"/>
<path d="M14.4 17.6 L16.6 17 V25.3 L14.4 26Z" fill="#f58220"/>
<circle cx="20.4" cy="18" r="2.2" fill="#ee1c25"/>
<circle cx="29" cy="14.8" r="2" fill="#d8d8d8" stroke="#f58220" stroke-width=".9"/>
<path d="M24 17.5 l2.5 -.7 M33 13.8 l3 -.9 M33.5 16.5 l7 -2.1 M20 22 l3 -.9" stroke="#e8e8e8" stroke-width="1"/>
<path d="M36.5 12.5 l2.5 -.7 M23.5 21 l2.5 -.7" stroke="#f58220" stroke-width="1.6"/><circle cx="41.5" cy="14" r="1" fill="#f58220"/>
<path d="M24.1 25 V37 Q24.1 43 30.5 43 H41" fill="none" stroke="#0a0a0a" stroke-width="2.6"/>
<path d="M40.5 39.5 L46 43 L40.5 46.5Z" fill="#0a0a0a"/></svg><div class="a" style="left:251.5px;top:407px;width:156px;height:80.5px;border:3px solid #fff;border-radius:16px;background:linear-gradient(#737373,#6e6e6e 60%,#6a6a6a);box-shadow:inset 0 -2.5px 1px #3a3a3a,inset 0 2px 2px #858585,inset -1.5px 0 1px #555,inset 1.5px 0 1px #888;"></div><span class="t" id="t106" style="top:462.4px;font-size:12px;color:#fff;left:329.3px;transform:translateX(-50%) scaleX(0.9994);-webkit-text-stroke:.2px #fff;letter-spacing:0px;">RPM input</span><svg style="left:307px;top:415px" width="45" height="45" viewBox="0 0 45 45">
<circle cx="22.5" cy="22.5" r="21" fill="#1d1d1d" stroke="#fff" stroke-width="2.2"/>
<circle cx="22.5" cy="22.5" r="22.3" fill="none" stroke="#2a2a2a" stroke-width=".8"/>
<path d="M12.2 32.8 A14.5 14.5 0 0 1 15 10" fill="none" stroke="#7ac143" stroke-width="3.2"/>
<path d="M15 10 A14.5 14.5 0 0 1 26 8.4" fill="none" stroke="#b5d334" stroke-width="3.2"/>
<path d="M26 8.4 A14.5 14.5 0 0 1 33 12.5" fill="none" stroke="#f7a11d" stroke-width="3.2"/>
<path d="M33 12.5 A14.5 14.5 0 0 1 32.8 32.8" fill="none" stroke="#ed1c24" stroke-width="3.2"/>
<path d="M21 24 L32.5 12 L24.5 26Z" fill="#f4b5b0" stroke="#c22" stroke-width=".6"/></svg><div class="a" style="left:251.5px;top:493px;width:156px;height:80.5px;border:3px solid #fff;border-radius:16px;background:linear-gradient(#737373,#6e6e6e 60%,#6a6a6a);box-shadow:inset 0 -2.5px 1px #3a3a3a,inset 0 2px 2px #858585,inset -1.5px 0 1px #555,inset 1.5px 0 1px #888;"></div><span class="t" id="t107" style="top:548.4px;font-size:12px;color:#fff;left:329.3px;transform:translateX(-50%) scaleX(0.9943);-webkit-text-stroke:.2px #fff;letter-spacing:0px;">Unit control inputs</span><svg style="left:306px;top:508px" width="48" height="34" viewBox="0 0 48 34">
<circle cx="40.5" cy="12.5" r="5" fill="#ed1c24" stroke="#8c1015" stroke-width=".8"/>
<path d="M2.5 11 L17 4 Q23 1.5 24 5 Q24.5 7.5 19 9.5 L36 9.5 Q39.5 9.8 39.5 12.5 Q39.5 15.2 36 15.5 L27 15.5 Q30.5 16 30.5 18.5 Q30.5 21 27.5 21.2 Q30 22 29.5 24.3 Q29 26.5 26.5 26.5 Q28 27.5 27.5 29.5 Q27 31.5 24 31.5 L9 31.5 Q2.5 31 2.5 26Z" fill="#f6e3d6" stroke="#222" stroke-width="1.5" stroke-linejoin="round"/>
<path d="M27 15.5 H22 M27.5 21.2 H22 M26.5 26.5 H22" stroke="#222" stroke-width="1.2" fill="none"/></svg><svg style="left:901px;top:149px" width="128" height="93" viewBox="0 0 128 93">
<defs><linearGradient id="rg149" x1="0" y1="0" x2="0" y2="1"><stop offset="0" stop-color="#747474"/><stop offset=".7" stop-color="#6d6d6d"/><stop offset="1" stop-color="#666"/></linearGradient></defs>
<path d="M64 1.5 L15 15.5 Q1.5 19.5 1.5 33 V76 Q1.5 91.5 17 91.5 H111 Q126.5 91.5 126.5 76 V33 Q126.5 19.5 113 15.5 Z" fill="#f7941d" stroke="#f7941d" stroke-width="3" stroke-linejoin="round"/>
<path d="M64 3.4 L15.6 17.2 Q3.2 20.7 3.2 33 V76 Q3.2 89.8 17 89.8 H111 Q124.8 89.8 124.8 76 V33 Q124.8 20.7 112.4 17.2 Z" fill="#3a3a3a"/>
<path d="M64 3.4 L15.6 17.2 Q3.2 20.7 3.2 33 V76 Q3.2 89.8 17 89.8 H111 Q124.8 89.8 124.8 76 V33 Q124.8 20.7 112.4 17.2 Z" fill="url(#rg149)" transform="translate(64,46.5) scale(.975,.95) translate(-64,-47.8)"/>
<path d="M5.2 62 V33.5 Q5.2 22 16.5 18.8 L64 5.3 L111.5 18.8" fill="none" stroke="#a0a0a0" stroke-width="1.3" opacity=".75"/>
</svg><span class="t" id="t108" style="top:162.3px;font-size:12px;color:#fff;left:965px;transform:translateX(-50%) scaleX(0.9941);-webkit-text-stroke:.25px #fff;letter-spacing:0px;">Set up</span><span class="t" id="t109" style="top:174.3px;font-size:12px;color:#fff;left:965px;transform:translateX(-50%) scaleX(1.0039);-webkit-text-stroke:.25px #fff;letter-spacing:0px;">gear indicator</span><svg style="left:940px;top:186px" width="52" height="50" viewBox="0 0 52 50">
<g fill="none" stroke="#232323" stroke-width="4.4" stroke-linecap="round" stroke-linejoin="round"><path d="M6 13 V37 M25 13 V37 M6 24.5 H44.5 V13"/></g>
<g fill="none" stroke="#ffc93c" stroke-width="2.2" stroke-linecap="round" stroke-linejoin="round"><path d="M6 13 V37 M25 13 V37 M6 24.5 H44.5 V13"/></g>
<g font-family="Liberation Sans,sans-serif" font-weight="bold" font-size="10" fill="#1e1e1e" text-anchor="middle">
<text x="6" y="10">1</text><text x="25" y="10">3</text><text x="44.5" y="10">5</text><text x="6" y="47.5">2</text><text x="25" y="47.5">4</text></g></svg><svg style="left:901px;top:259px" width="128" height="93" viewBox="0 0 128 93">
<defs><linearGradient id="rg259" x1="0" y1="0" x2="0" y2="1"><stop offset="0" stop-color="#747474"/><stop offset=".7" stop-color="#6d6d6d"/><stop offset="1" stop-color="#666"/></linearGradient></defs>
<path d="M64 1.5 L15 15.5 Q1.5 19.5 1.5 33 V76 Q1.5 91.5 17 91.5 H111 Q126.5 91.5 126.5 76 V33 Q126.5 19.5 113 15.5 Z" fill="#0c8ce0" stroke="#0c8ce0" stroke-width="3" stroke-linejoin="round"/>
<path d="M64 3.4 L15.6 17.2 Q3.2 20.7 3.2 33 V76 Q3.2 89.8 17 89.8 H111 Q124.8 89.8 124.8 76 V33 Q124.8 20.7 112.4 17.2 Z" fill="#3a3a3a"/>
<path d="M64 3.4 L15.6 17.2 Q3.2 20.7 3.2 33 V76 Q3.2 89.8 17 89.8 H111 Q124.8 89.8 124.8 76 V33 Q124.8 20.7 112.4 17.2 Z" fill="url(#rg259)" transform="translate(64,46.5) scale(.975,.95) translate(-64,-47.8)"/>
<path d="M5.2 62 V33.5 Q5.2 22 16.5 18.8 L64 5.3 L111.5 18.8" fill="none" stroke="#a0a0a0" stroke-width="1.3" opacity=".75"/>
</svg><span class="t" id="t110" style="top:272.3px;font-size:12px;color:#fff;left:965px;transform:translateX(-50%) scaleX(0.9941);-webkit-text-stroke:.25px #fff;letter-spacing:0px;">Set up</span><span class="t" id="t111" style="top:284.3px;font-size:12px;color:#fff;left:965px;transform:translateX(-50%) scaleX(0.9994);-webkit-text-stroke:.25px #fff;letter-spacing:0px;">LCD data areas</span><svg style="left:943px;top:298px" width="48" height="46" viewBox="0 0 48 46">
<g fill="#231f20" stroke="#5e5e5e" stroke-width=".35"><path d="M1.2 0 H13.9 L12.2 3.8 H4.8Z"/><path d="M15.1 0 H27.8 L24.2 3.8 H16.8Z"/><path d="M0 1 L3.8 4.8 V19 L1.5 21.8 L0 20.5Z"/><path d="M29 1 L25.2 4.8 V19 L27.5 21.8 L29 20.5Z"/><path d="M0 44 L3.8 40.2 V26 L1.5 23.2 L0 24.5Z"/><path d="M29 44 L25.2 40.2 V26 L27.5 23.2 L29 24.5Z"/><path d="M1.2 45 H13.9 L12.2 41.2 H4.8Z"/><path d="M15.1 45 H27.8 L24.2 41.2 H16.8Z"/><path d="M14.5 1.2 L16.4 4.8 V18.5 L14.5 21.5 L12.6 18.5 V4.8Z"/><path d="M14.5 43.8 L16.4 40.2 V26.5 L14.5 23.5 L12.6 26.5 V40.2Z"/><path d="M2.3 22.5 L4.8 20.6 H12 L13.8 22.5 L12 24.4 H4.8Z"/><path d="M26.7 22.5 L24.2 20.6 H17 L15.2 22.5 L17 24.4 H24.2Z"/><path d="M5 5.5 H7.3 L11.8 16.5 V19.6 H10 L5 8.5Z"/><path d="M24 5.5 H21.7 L17.2 16.5 V19.6 H19 L24 8.5Z"/><path d="M5 39.5 H7.3 L11.8 28.5 V25.4 H10 L5 36.5Z"/><path d="M24 39.5 H21.7 L17.2 28.5 V25.4 H19 L24 36.5Z"/></g>
<rect x="30.3" y="40.5" width="3.4" height="3.4" fill="#231f20"/>
<path d="M30.5 18.3 L44.8 26.5 L38.8 28 L45.1 39.3 L42.5 41.5 L36.1 29.9 L30.7 33.6Z" fill="#fdc943" stroke="#2a2230" stroke-width="1.1" stroke-linejoin="round"/></svg><svg style="left:901px;top:370px" width="128" height="93" viewBox="0 0 128 93">
<defs><linearGradient id="rg370" x1="0" y1="0" x2="0" y2="1"><stop offset="0" stop-color="#747474"/><stop offset=".7" stop-color="#6d6d6d"/><stop offset="1" stop-color="#666"/></linearGradient></defs>
<path d="M64 1.5 L15 15.5 Q1.5 19.5 1.5 33 V76 Q1.5 91.5 17 91.5 H111 Q126.5 91.5 126.5 76 V33 Q126.5 19.5 113 15.5 Z" fill="#0c8ce0" stroke="#0c8ce0" stroke-width="3" stroke-linejoin="round"/>
<path d="M64 3.4 L15.6 17.2 Q3.2 20.7 3.2 33 V76 Q3.2 89.8 17 89.8 H111 Q124.8 89.8 124.8 76 V33 Q124.8 20.7 112.4 17.2 Z" fill="#3a3a3a"/>
<path d="M64 3.4 L15.6 17.2 Q3.2 20.7 3.2 33 V76 Q3.2 89.8 17 89.8 H111 Q124.8 89.8 124.8 76 V33 Q124.8 20.7 112.4 17.2 Z" fill="url(#rg370)" transform="translate(64,46.5) scale(.975,.95) translate(-64,-47.8)"/>
<path d="M5.2 62 V33.5 Q5.2 22 16.5 18.8 L64 5.3 L111.5 18.8" fill="none" stroke="#a0a0a0" stroke-width="1.3" opacity=".75"/>
</svg><span class="t" id="t112" style="top:383.3px;font-size:12px;color:#fff;left:965px;transform:translateX(-50%) scaleX(0.9941);-webkit-text-stroke:.25px #fff;letter-spacing:0px;">Set up</span><span class="t" id="t113" style="top:395.3px;font-size:12px;color:#fff;left:965px;transform:translateX(-50%) scaleX(0.9957);-webkit-text-stroke:.25px #fff;letter-spacing:0px;">lap/sector timing</span><svg style="left:943px;top:408px" width="46" height="48" viewBox="0 0 46 48">
<defs><pattern id="chk" width="8.6" height="8.6" patternUnits="userSpaceOnUse" patternTransform="translate(3,10) rotate(24) skewX(-12)"><rect width="8.6" height="8.6" fill="#f4f4f4"/><rect width="4.3" height="4.3" fill="#151515"/><rect x="4.3" y="4.3" width="4.3" height="4.3" fill="#151515"/></pattern></defs>
<path d="M24 9 Q25 2.5 32 2.5 Q40 3 39.5 10 Q39 15 35 19 Q30 24 29 28.5 Q30 31 35 32.5 Q40 34 39.5 38 Q39 43.2 33 43.2 H12.5 Q4.5 43 4.3 37 Q4.3 31 6 28" fill="none" stroke="#3a1013" stroke-width="4.6" stroke-linecap="round"/>
<path d="M24 9 Q25 2.5 32 2.5 Q40 3 39.5 10 Q39 15 35 19 Q30 24 29 28.5 Q30 31 35 32.5 Q40 34 39.5 38 Q39 43.2 33 43.2 H12.5 Q4.5 43 4.3 37 Q4.3 31 6 28" fill="none" stroke="#f41f26" stroke-width="3.3" stroke-linecap="round"/>
<path d="M3 10.5 Q12 5.5 21 8.2 Q30 11.5 36 19 L40 31.8 Q33 27.5 27 26.2 Q18 23.5 9.3 30.5 Z" fill="url(#chk)" stroke="#222" stroke-width=".6"/>
<path d="M2.6 10 L12.2 43.8" stroke="#3a3a3a" stroke-width="2.6" stroke-linecap="round"/><path d="M2.6 10 L12.2 43.8" stroke="#e9e9e9" stroke-width="1.5" stroke-linecap="round"/>
<circle cx="2.5" cy="10" r="1.5" fill="#f2f2f2"/></svg><svg style="left:901px;top:481px" width="128" height="93" viewBox="0 0 128 93">
<defs><linearGradient id="rg481" x1="0" y1="0" x2="0" y2="1"><stop offset="0" stop-color="#747474"/><stop offset=".7" stop-color="#6d6d6d"/><stop offset="1" stop-color="#666"/></linearGradient></defs>
<path d="M64 1.5 L15 15.5 Q1.5 19.5 1.5 33 V76 Q1.5 91.5 17 91.5 H111 Q126.5 91.5 126.5 76 V33 Q126.5 19.5 113 15.5 Z" fill="#9b26af" stroke="#9b26af" stroke-width="3" stroke-linejoin="round"/>
<path d="M64 3.4 L15.6 17.2 Q3.2 20.7 3.2 33 V76 Q3.2 89.8 17 89.8 H111 Q124.8 89.8 124.8 76 V33 Q124.8 20.7 112.4 17.2 Z" fill="#3a3a3a"/>
<path d="M64 3.4 L15.6 17.2 Q3.2 20.7 3.2 33 V76 Q3.2 89.8 17 89.8 H111 Q124.8 89.8 124.8 76 V33 Q124.8 20.7 112.4 17.2 Z" fill="url(#rg481)" transform="translate(64,46.5) scale(.975,.95) translate(-64,-47.8)"/>
<path d="M5.2 62 V33.5 Q5.2 22 16.5 18.8 L64 5.3 L111.5 18.8" fill="none" stroke="#a0a0a0" stroke-width="1.3" opacity=".75"/>
</svg><span class="t" id="t114" style="top:494.3px;font-size:12px;color:#fff;left:965px;transform:translateX(-50%) scaleX(0.9941);-webkit-text-stroke:.25px #fff;letter-spacing:0px;">Set up</span><span class="t" id="t115" style="top:506.3px;font-size:12px;color:#fff;left:965px;transform:translateX(-50%) scaleX(0.9996);-webkit-text-stroke:.25px #fff;letter-spacing:0px;">alarms</span><svg style="left:937px;top:521px" width="56" height="46" viewBox="0 0 56 46">
<defs><linearGradient id="bellg" x1="0" y1="0" x2="1" y2="0"><stop offset="0" stop-color="#9a9a9a"/><stop offset=".5" stop-color="#dadada"/><stop offset="1" stop-color="#a2a2a2"/></linearGradient></defs>
<g fill="none" stroke="#2a1a10" stroke-width="3.8" stroke-linecap="round">
<path d="M16.5 14.5 Q8.5 22 12 31 M13.3 12 Q4.5 22 8.2 32 M10.5 9.5 Q.5 22 4.5 33 M38.5 14.5 Q46.5 22 43 31 M41.7 12 Q50.5 22 46.8 32 M44.5 9.5 Q54.5 22 50.5 33"/></g>
<g fill="none" stroke-width="2.6" stroke-linecap="round">
<path d="M16.5 14.5 Q8.5 22 12 31 M38.5 14.5 Q46.5 22 43 31" stroke="#fdb913"/>
<path d="M13.3 12 Q4.5 22 8.2 32 M41.7 12 Q50.5 22 46.8 32" stroke="#f58220"/>
<path d="M10.5 9.5 Q.5 22 4.5 33 M44.5 9.5 Q54.5 22 50.5 33" stroke="#ee1c25"/></g>
<circle cx="27.5" cy="4.2" r="4.2" fill="none" stroke="#222" stroke-width="2.4"/><circle cx="27.5" cy="4.2" r="4.2" fill="none" stroke="#c9c9c9" stroke-width="1.2"/>
<path d="M27.5 6.5 V11" stroke="#222" stroke-width="2.6"/><path d="M27.5 6.5 V11" stroke="#e0e0e0" stroke-width="1.3"/>
<path d="M22.5 37.5 A5 5 0 0 0 32.5 37.5Z" fill="#e2e2e2" stroke="#222" stroke-width="1.1"/>
<path d="M20.75 12.5 Q20.75 10.9 23 10.9 H32 Q34.25 10.9 34.25 12.5 L38 27.75 Q40 33 45.3 37.5 H9.7 Q15 33 17 27.75 Z" fill="url(#bellg)" stroke="#222" stroke-width="1.3" stroke-linejoin="round"/></svg><div class="a" style="left:241px;top:598px;width:797px;height:73px;border:1px solid #dcdcdc;box-shadow:inset 1px 1px 0 rgba(255,255,255,.7),1px 1px 0 rgba(255,255,255,.7);"></div><div class="a" style="left:247.8px;top:592px;width:80.5px;height:12px;background:#f0f0f0;"></div><span class="t" id="t116" style="top:592.7px;font-size:12px;color:#000;left:249.8px;transform-origin:0 50%;transform:scaleX(0.8559);letter-spacing:0px;">Communications</span><div class="a" style="left:249px;top:611px;width:146.5px;height:21px;border:1px solid #acacac;background:linear-gradient(#f1f1f1,#e6e6e6);"></div><span class="t" id="t117" style="top:616.4px;font-size:12px;color:#000;left:253px;transform-origin:0 50%;transform:scaleX(0.873);letter-spacing:0px;">USB Port (Port 4)</span><svg style="left:381.5px;top:618.5px" width="10" height="7" viewBox="0 0 10 7" fill="none" stroke="#3c3c3c" stroke-width="1.8"><path d="M1 1 L5 5 L9 1"/></svg><div class="a" style="left:402px;top:611px;width:146.5px;height:21px;border:1px solid #acacac;background:linear-gradient(#f1f1f1,#e6e6e6);"></div><span class="t" id="t118" style="top:616.4px;font-size:12px;color:#000;left:406px;transform-origin:0 50%;transform:scaleX(0.8939);letter-spacing:0px;">115200</span><svg style="left:534.5px;top:618.5px" width="10" height="7" viewBox="0 0 10 7" fill="none" stroke="#3c3c3c" stroke-width="1.8"><path d="M1 1 L5 5 L9 1"/></svg><div class="a" style="left:556px;top:610px;width:144.5px;height:22px;border:1px solid #acacac;background:linear-gradient(#f2f2f2,#ebebeb 50%,#dddddd);"></div><span class="t" id="t119" style="top:615.1px;font-size:12px;color:#000;left:628.25px;transform:translateX(-50%) scaleX(0.8662);letter-spacing:0px;">Send Configuration</span><div class="a" style="left:707px;top:610px;width:144.5px;height:22px;border:1px solid #acacac;background:linear-gradient(#f2f2f2,#ebebeb 50%,#dddddd);"></div><span class="t" id="t120" style="top:615.1px;font-size:12px;color:#000;left:779.25px;transform:translateX(-50%) scaleX(0.8704);letter-spacing:0px;">Read Configuration</span><div class="a" style="left:249px;top:636px;width:781px;height:9.5px;background:#e6e6e6;border:1px solid #bcbcbc;"></div><div class="a" style="left:387px;top:175px;width:506px;height:406.5px;background:#efc968;border:1px solid #caa650;"></div><div class="a" style="left:393.5px;top:204px;width:492px;height:371px;background:#f0f0f0;border:1px solid #d4b25a;box-shadow:inset 0 0 0 1px #f7f7fb;"></div><span class="t" id="t121" style="top:182.45px;font-size:15px;color:#2b2b2b;left:639.3px;transform:translateX(-50%) scaleX(1.0078);letter-spacing:0px;">Set up gear indicator</span><div class="a" style="left:404px;top:214px;width:473px;height:83px;border:1px solid #dcdcdc;box-shadow:inset 1px 1px 0 rgba(255,255,255,.7),1px 1px 0 rgba(255,255,255,.7);"></div><div class="a" style="left:410.3px;top:208px;width:119px;height:12px;background:#f0f0f0;"></div><span class="t" id="t122" style="top:209.2px;font-size:12px;color:#000;left:412.3px;transform-origin:0 50%;transform:scaleX(0.8707);letter-spacing:0px;">Gear indicator properties</span><div class="a" style="left:417px;top:227.9px;width:13px;height:13px;background:#fff;border-radius:50%;border:1px solid #4a4a4a;"></div><span class="t" id="t123" style="top:229.2px;font-size:12px;color:#000;left:436.3px;transform-origin:0 50%;transform:scaleX(0.8344);letter-spacing:0px;">Hide</span><div class="a" style="left:417px;top:249.1px;width:13px;height:13px;background:#fff;border-radius:50%;border:1px solid #4a4a4a;"></div><span class="t" id="t124" style="top:250.4px;font-size:12px;color:#000;left:435.6px;transform-origin:0 50%;transform:scaleX(0.8836);letter-spacing:0px;">Calculate from wheel speed and RPM</span><div class="a" style="left:417px;top:271px;width:13px;height:13px;background:#fff;border-radius:50%;border:1px solid #4a4a4a;"></div><div class="a" style="left:420px;top:274px;width:7px;height:7px;background:#1a1a1a;border-radius:50%;"></div><span class="t" id="t125" style="top:272.3px;font-size:12px;color:#000;left:436.3px;transform-origin:0 50%;transform:scaleX(0.8642);letter-spacing:0px;">Map from variable</span><div class="a" style="left:534px;top:268px;width:265px;height:20.5px;border:1px solid #acacac;background:linear-gradient(#f1f1f1,#e6e6e6);"></div><svg style="left:785px;top:275.25px" width="10" height="7" viewBox="0 0 10 7" fill="none" stroke="#3c3c3c" stroke-width="1.8"><path d="M1 1 L5 5 L9 1"/></svg><span class="t" id="t126" style="top:273.3px;font-size:12px;color:#000;left:562.7px;transform-origin:0 50%;transform:scaleX(0.8923);letter-spacing:0px;">Throttle position  (aux 1) : "THR"</span><span class="t" id="t127" style="top:273.9px;font-size:12px;color:#000;left:808px;transform-origin:0 50%;transform:scaleX(0.8565);letter-spacing:0px;">0.1 [%]</span><div class="a" style="left:403px;top:304px;width:472px;height:235px;border:1px solid #dcdcdc;box-shadow:inset 1px 1px 0 rgba(255,255,255,.7),1px 1px 0 rgba(255,255,255,.7);"></div><div class="a" style="left:410px;top:298px;width:120px;height:12px;background:#f0f0f0;"></div><span class="t" id="t128" style="top:299.2px;font-size:12px;color:#000;left:412px;transform-origin:0 50%;transform:scaleX(0.8609);letter-spacing:0px;">Enter gearing information</span><span class="t" id="t129" style="top:324.3px;font-size:12px;color:#000;left:511.3px;transform-origin:0 50%;transform:scaleX(0.8792);letter-spacing:0px;">No of forward gears [1-7]</span><div class="a" style="left:644px;top:319px;width:49.7px;height:20.5px;border:1px solid #acacac;background:linear-gradient(#f1f1f1,#e6e6e6);"></div><span class="t" id="t130" style="top:324.15px;font-size:12px;color:#000;left:648px;transform-origin:0 50%;transform:scaleX(0.972);letter-spacing:0px;">7</span><svg style="left:679.7px;top:326.25px" width="10" height="7" viewBox="0 0 10 7" fill="none" stroke="#3c3c3c" stroke-width="1.8"><path d="M1 1 L5 5 L9 1"/></svg><div class="a" style="left:504.3px;top:350.5px;width:287.7px;height:173.3px;background:#ababab;border:1px solid #000;overflow:hidden"><div class="a" style="left:0;top:0;width:250.5px;height:20px;background:linear-gradient(#fff,#f9fafb);border-bottom:1px solid #d5dfe5"></div><div class="a" style="left:100.2px;top:0;width:1px;height:20px;background:#e3e8ee"></div><div class="a" style="left:0;top:20.5px;width:100.5px;height:22px;background:#3399ff;border-bottom:1px solid #9c9c9c;border-right:1px solid #9c9c9c"></div><div class="a" style="left:100.5px;top:20.5px;width:150px;height:22px;background:#fff;border-bottom:1px solid #a0a0a0;border-right:1px solid #a0a0a0"></div><div class="a" style="left:0;top:42.5px;width:100.5px;height:22px;background:#ababab;border-bottom:1px solid #9c9c9c;border-right:1px solid #9c9c9c"></div><div class="a" style="left:100.5px;top:42.5px;width:150px;height:22px;background:#fff;border-bottom:1px solid #a0a0a0;border-right:1px solid #a0a0a0"></div><div class="a" style="left:0;top:64.5px;width:100.5px;height:22px;background:#ababab;border-bottom:1px solid #9c9c9c;border-right:1px solid #9c9c9c"></div><div class="a" style="left:100.5px;top:64.5px;width:150px;height:22px;background:#fff;border-bottom:1px solid #a0a0a0;border-right:1px solid #a0a0a0"></div><div class="a" style="left:0;top:86.5px;width:100.5px;height:22px;background:#ababab;border-bottom:1px solid #9c9c9c;border-right:1px solid #9c9c9c"></div><div class="a" style="left:100.5px;top:86.5px;width:150px;height:22px;background:#fff;border-bottom:1px solid #a0a0a0;border-right:1px solid #a0a0a0"></div><div class="a" style="left:0;top:108.5px;width:100.5px;height:22px;background:#ababab;border-bottom:1px solid #9c9c9c;border-right:1px solid #9c9c9c"></div><div class="a" style="left:100.5px;top:108.5px;width:150px;height:22px;background:#fff;border-bottom:1px solid #a0a0a0;border-right:1px solid #a0a0a0"></div><div class="a" style="left:0;top:130.5px;width:100.5px;height:22px;background:#ababab;border-bottom:1px solid #9c9c9c;border-right:1px solid #9c9c9c"></div><div class="a" style="left:100.5px;top:130.5px;width:150px;height:22px;background:#fff;border-bottom:1px solid #a0a0a0;border-right:1px solid #a0a0a0"></div><div class="a" style="left:0;top:152.5px;width:100.5px;height:22px;background:#ababab;border-bottom:1px solid #9c9c9c;border-right:1px solid #9c9c9c"></div><div class="a" style="left:100.5px;top:152.5px;width:150px;height:22px;background:#fff;border-bottom:1px solid #a0a0a0;border-right:1px solid #a0a0a0"></div><div class="a" style="left:268.5px;top:0;width:17.2px;height:172px;background:#f0f0f0"></div><div class="a" style="left:269.7px;top:16.5px;width:15px;height:105.5px;background:#cdcdcd"></div><svg style="left:273.2px;top:5.5px" width="8" height="6" viewBox="0 0 8 6" fill="none" stroke="#505050" stroke-width="1.6"><path d="M.8 4.8 L4 1.5 L7.2 4.8"/></svg><svg style="left:273.2px;top:160.5px" width="8" height="6" viewBox="0 0 8 6" fill="none" stroke="#505050" stroke-width="1.6"><path d="M.8 1.2 L4 4.5 L7.2 1.2"/></svg></div><span class="t" id="t131" style="top:356.1px;font-size:12px;color:#000;left:513.8px;transform-origin:0 50%;transform:scaleX(0.8618);letter-spacing:0px;">Gear</span><span class="t" id="t132" style="top:356.1px;font-size:12px;color:#000;left:613px;transform-origin:0 50%;transform:scaleX(0.8889);letter-spacing:0px;">Value</span><span class="t" id="t133" style="top:377.2px;font-size:12px;color:#fff;left:509.3px;transform-origin:0 50%;transform:scaleX(0.8839);letter-spacing:0px;">Reverse</span><span class="t" id="t134" style="top:377.2px;font-size:12px;color:#000;left:609.3px;">0</span><span class="t" id="t135" style="top:399.2px;font-size:12px;color:#000;left:509.3px;transform-origin:0 50%;transform:scaleX(0.8659);letter-spacing:0px;">Neutral</span><span class="t" id="t136" style="top:399.2px;font-size:12px;color:#000;left:609.3px;">0</span><span class="t" id="t137" style="top:421.2px;font-size:12px;color:#000;left:509.3px;transform-origin:0 50%;transform:scaleX(0.869);letter-spacing:0px;">1st Gear</span><span class="t" id="t138" style="top:421.2px;font-size:12px;color:#000;left:609.3px;">0</span><span class="t" id="t139" style="top:443.2px;font-size:12px;color:#000;left:509.3px;transform-origin:0 50%;transform:scaleX(0.8792);letter-spacing:0px;">2nd Gear</span><span class="t" id="t140" style="top:443.2px;font-size:12px;color:#000;left:609.3px;">0</span><span class="t" id="t141" style="top:465.2px;font-size:12px;color:#000;left:509.3px;transform-origin:0 50%;transform:scaleX(0.8657);letter-spacing:0px;">3rd Gear</span><span class="t" id="t142" style="top:465.2px;font-size:12px;color:#000;left:609.3px;">0</span><span class="t" id="t143" style="top:487.2px;font-size:12px;color:#000;left:509.3px;transform-origin:0 50%;transform:scaleX(0.8779);letter-spacing:0px;">4th Gear</span><span class="t" id="t144" style="top:487.2px;font-size:12px;color:#000;left:609.3px;">0</span><span class="t" id="t145" style="top:509.2px;font-size:12px;color:#000;left:509.3px;transform-origin:0 50%;transform:scaleX(0.8779);letter-spacing:0px;">5th Gear</span><span class="t" id="t146" style="top:509.2px;font-size:12px;color:#000;left:609.3px;">0</span><div class="a" style="left:694px;top:546.3px;width:88px;height:21.5px;border:1px solid #3399ff;background:linear-gradient(#f2f2f2,#ebebeb 50%,#dddddd);"></div><span class="t" id="t147" style="top:551.15px;font-size:12px;color:#000;left:738px;transform:translateX(-50%) scaleX(0.9514);letter-spacing:0px;">OK</span><div class="a" style="left:790px;top:546.3px;width:88px;height:21.5px;border:1px solid #acacac;background:linear-gradient(#f2f2f2,#ebebeb 50%,#dddddd);"></div><span class="t" id="t148" style="top:551.15px;font-size:12px;color:#000;left:834px;transform:translateX(-50%) scaleX(0.9101);letter-spacing:0px;">Cancel</span><div class="a" style="left:0px;top:760px;width:1280px;height:40px;background:rgba(163,139,83,.66);border-top:1px solid rgba(120,100,60,.35);"></div><svg style="left:12px;top:766px" width="27" height="28" viewBox="0 0 27 28" fill="#fff">
<path d="M0 4.2 L11 2.6 V13 H0Z M12.5 2.4 L26.5 .3 V13 H12.5Z M0 14.5 H11 V25 L0 23.4Z M12.5 14.5 H26.5 V27.5 L12.5 25.3Z"/></svg><div class="a" style="left:52px;top:760.5px;width:58.5px;height:39px;background:linear-gradient(rgba(255,255,255,.2) 0,rgba(255,255,255,.17) 49%,rgba(255,255,255,.12) 51%,rgba(255,255,255,.13) 100%);border:1px solid rgba(255,255,255,.4);box-shadow:0 0 0 1px rgba(100,85,50,.35);"></div><div class="a" style="left:176px;top:760.5px;width:58.5px;height:39px;background:linear-gradient(rgba(255,255,255,.2) 0,rgba(255,255,255,.17) 49%,rgba(255,255,255,.12) 51%,rgba(255,255,255,.13) 100%);border:1px solid rgba(255,255,255,.4);box-shadow:0 0 0 1px rgba(100,85,50,.35);"></div><div class="a" style="left:238px;top:760.5px;width:58.5px;height:39px;background:linear-gradient(rgba(255,255,255,.2) 0,rgba(255,255,255,.17) 49%,rgba(255,255,255,.12) 51%,rgba(255,255,255,.13) 100%);border:1px solid rgba(255,255,255,.4);box-shadow:0 0 0 1px rgba(100,85,50,.35);"></div><div class="a" style="left:300px;top:760.5px;width:58.5px;height:39px;background:linear-gradient(rgba(255,255,255,.2) 0,rgba(255,255,255,.17) 49%,rgba(255,255,255,.12) 51%,rgba(255,255,255,.13) 100%);border:1px solid rgba(255,255,255,.4);box-shadow:0 0 0 1px rgba(100,85,50,.35);"></div><div class="a" style="left:424px;top:760.5px;width:58.5px;height:39px;background:linear-gradient(rgba(255,255,255,.2) 0,rgba(255,255,255,.17) 49%,rgba(255,255,255,.12) 51%,rgba(255,255,255,.13) 100%);border:1px solid rgba(255,255,255,.4);box-shadow:0 0 0 1px rgba(100,85,50,.35);"></div><div class="a" style="left:486px;top:760.5px;width:58.5px;height:39px;background:linear-gradient(rgba(255,255,255,.2) 0,rgba(255,255,255,.17) 49%,rgba(255,255,255,.12) 51%,rgba(255,255,255,.13) 100%);border:1px solid rgba(255,255,255,.4);box-shadow:0 0 0 1px rgba(100,85,50,.35);"></div><div class="a" style="left:362px;top:760px;width:58.5px;height:39px;background:rgba(255,255,255,.42);border:1px solid rgba(255,255,255,.85);box-shadow:inset 0 0 0 1px rgba(120,100,60,.35);"></div><svg style="left:65px;top:764px" width="33" height="32" viewBox="0 0 33 32">
<defs><linearGradient id="fo" x1="0" y1="0" x2="0" y2="1"><stop offset="0" stop-color="#fff0a8"/><stop offset="1" stop-color="#f2cc5e"/></linearGradient>
<linearGradient id="fb" x1="0" y1="0" x2="0" y2="1"><stop offset="0" stop-color="#8fd6f7"/><stop offset="1" stop-color="#2a8fd6"/></linearGradient></defs>
<path d="M1 5 H12 L14 7.5 H31 V27 H1Z" fill="#e5b84a"/>
<rect x="3" y="3.5" width="4" height="2" fill="#2aa84a"/><rect x="12" y="4.5" width="4" height="2" fill="#d93a2b"/><rect x="21" y="5" width="4" height="2" fill="#2f7fd6"/>
<path d="M1 9 H32 V28 H1Z" fill="url(#fo)" stroke="#d6a93f" stroke-width=".8"/>
<path d="M6 19 Q6 17 8 17 H25 Q27 17 27 19 V31 H21 V24 H12 V31 H6Z" fill="url(#fb)" stroke="#1e78c2" stroke-width=".9"/>
<path d="M7 20.5 H26" stroke="#d8f1ff" stroke-width="1.2"/></svg><div class="a" style="left:128px;top:765px;width:30px;height:30px;background:#008a00;"></div><svg style="left:128px;top:765px" width="30" height="30" viewBox="0 0 30 30" fill="none">
<path d="M10.5 9 Q10.5 3.5 15 3.5 Q19.5 3.5 19.5 9" stroke="#fff" stroke-width="1.4"/>
<path d="M5 9 H25 L23.5 25.5 H6.5Z" fill="#fff"/>
<path d="M10 13.5 L14.3 12.9 V17 H10Z M15.3 12.7 L20 12 V17 H15.3Z M10 18 H14.3 V22.1 L10 21.5Z M15.3 18 H20 V23 L15.3 22.3Z" fill="#008a00"/></svg><div class="a" style="left:190px;top:765px;width:30px;height:30px;background:#5133ab;"></div><svg style="left:190px;top:765px" width="30" height="30" viewBox="0 0 30 30" fill="#fff"><rect x="13" y="3.5" width="4" height="6" transform="rotate(0 15 15)"/><rect x="13" y="3.5" width="4" height="6" transform="rotate(45 15 15)"/><rect x="13" y="3.5" width="4" height="6" transform="rotate(90 15 15)"/><rect x="13" y="3.5" width="4" height="6" transform="rotate(135 15 15)"/><rect x="13" y="3.5" width="4" height="6" transform="rotate(180 15 15)"/><rect x="13" y="3.5" width="4" height="6" transform="rotate(225 15 15)"/><rect x="13" y="3.5" width="4" height="6" transform="rotate(270 15 15)"/><rect x="13" y="3.5" width="4" height="6" transform="rotate(315 15 15)"/><circle cx="15" cy="15" r="8.3"/><circle cx="15" cy="15" r="4.2" fill="#5133ab"/></svg><div class="a" style="left:252px;top:765px;width:30px;height:30px;background:#8000ff;"></div><svg style="left:252px;top:765px" width="30" height="30" viewBox="0 0 30 30" fill="none" stroke="#fff"><circle cx="18" cy="12" r="7.2" stroke-width="2.6"/><path d="M12.5 17.5 L5 25" stroke-width="3.6" stroke-linecap="round"/></svg><svg style="left:313px;top:764px" width="32" height="32" viewBox="0 0 32 32"><rect width="32" height="32" fill="#20327c"/>
<path d="M3.5 2.5 V28 H28.5" fill="none" stroke="#fff" stroke-width="2"/>
<path d="M3.5 16 Q7 6 10.5 9 Q14 12 17.5 21 Q20.5 27.5 23 25 Q26 21 28 17.5" fill="none" stroke="#fff" stroke-width="1.9"/>
<g font-family="Liberation Serif,serif" font-style="italic" font-weight="bold" font-size="15"><text x="18" y="14" stroke="#fff" stroke-width="2.4" stroke-linejoin="round" fill="#fff">R</text><text x="18" y="14" fill="#f7a11d">R</text></g></svg><svg style="left:375px;top:764px" width="32" height="32" viewBox="0 0 16 16">
<rect width="16" height="16" fill="#0b2478"/>
<path d="M5.6 1.7 Q1.6 .6 1.6 3.8 Q1.6 6.8 5.6 5.9" fill="none" stroke="#f7a11d" stroke-width="1.5"/>
<ellipse cx="11.7" cy="3.9" rx="4.7" ry="2.1" transform="rotate(-42 11.7 3.9)" fill="#f7a11d"/>
<path d="M9 6.3 L7.4 8.6" stroke="#f7a11d" stroke-width="2.2"/>
<path d="M8 8 L.8 14.8" stroke="#d98f2a" stroke-width=".8"/></svg><svg style="left:436px;top:766px" width="34" height="30" viewBox="0 0 34 30">
<defs><linearGradient id="cpg" x1="0" y1="0" x2="0" y2="1"><stop offset="0" stop-color="#5fb3ea"/><stop offset="1" stop-color="#1f78c8"/></linearGradient></defs>
<rect x="1" y="1.5" width="32" height="21" rx="1.5" fill="url(#cpg)" stroke="#2f6fa8" stroke-width=".8"/>
<circle cx="9.5" cy="10" r="4.5" fill="none" stroke="#e9f4fc" stroke-width="1.4"/><path d="M9.5 10 V5.5 A4.5 4.5 0 0 1 14 10Z" fill="#f7a11d"/>
<rect x="19" y="6.5" width="10" height="3.4" fill="#1a5fa8" stroke="#e9f4fc" stroke-width=".9"/><rect x="19" y="13" width="10" height="3.4" fill="#1a5fa8" stroke="#e9f4fc" stroke-width=".9"/>
<circle cx="7" cy="17.5" r="1.1" fill="#f7a11d"/><circle cx="11" cy="17.5" r="1.1" fill="#f7a11d"/>
<ellipse cx="17" cy="25" rx="7" ry="4" fill="#c9cdd2" stroke="#8e949b" stroke-width=".7"/><ellipse cx="17" cy="23.8" rx="5" ry="2.2" fill="#eceff2"/></svg><svg style="left:500px;top:764px" width="32" height="32" viewBox="0 0 32 32">
<defs><radialGradient id="ieg" cx=".45" cy=".45" r=".6"><stop offset="0" stop-color="#a8f3ff"/><stop offset=".55" stop-color="#5fd0f7"/><stop offset="1" stop-color="#1d8fdc"/></radialGradient>
<linearGradient id="iey" x1="0" y1="0" x2="0" y2="1"><stop offset="0" stop-color="#ffe24a"/><stop offset="1" stop-color="#f5a800"/></linearGradient></defs>
<g transform="translate(14.6,14.2) rotate(-38)"><ellipse rx="17.6" ry="5.6" fill="none" stroke="#f3b61a" stroke-width="2.2"/></g>
<path d="M29.42 17.5 A13.5 13.5 0 1 0 28.73 20.5 H21.3 A5.6 5.3 0 0 1 10.3 17.5 Z M10.4 13.25 A5.65 5.4 0 0 1 21.7 13.25 Z" fill="url(#ieg)" stroke="#1a6db3" stroke-width=".8" fill-rule="evenodd"/>
<g transform="translate(14.6,14.2) rotate(-38)"><path d="M-17.6 0 A17.6 5.6 0 0 1 17.6 0" fill="none" stroke="url(#iey)" stroke-width="2.8" stroke-linecap="round"/><path d="M-16.5 -1 A17 5 0 0 1 16 -1.5" fill="none" stroke="#fff3b0" stroke-width=".7" opacity=".8"/></g>
</svg><svg style="left:1100px;top:778px" width="10" height="6" viewBox="0 0 10 6"><path d="M0 5.5 L5 .5 L10 5.5Z" fill="#fff"/></svg><svg style="left:1121px;top:773px" width="17" height="16" viewBox="0 0 17 16" fill="none" stroke="#fff">
<path d="M2 1 V4 M5 1 V4" stroke-width="1.4"/><path d="M.8 4.5 H6.2 V7.5 Q6.2 9 3.5 9 Q.8 9 .8 7.5Z" fill="#fff" stroke="none"/><path d="M3.5 9 V15" stroke-width="1.6"/>
<rect x="8.2" y="2.8" width="7.6" height="12" rx="1" stroke-width="1.5"/><rect x="10.3" y="5" width="3.4" height="7.6" fill="#fff" stroke="none"/><path d="M10.5 1.5 H13.5" stroke-width="1.6"/></svg><svg style="left:1145px;top:774px" width="17" height="15" viewBox="0 0 17 15">
<path d="M4 12 Q.5 12 .5 9 Q.5 6.5 3 6 Q3.5 2.5 7 2.5 Q9.5 2.5 10.5 4.5 Q14 3.5 14.5 7 Q16.5 7.5 16.5 9.5 Q16.5 12 14 12Z" fill="#d6cdb3" opacity=".85"/>
<path d="M2.5 .8 L14.5 14" stroke="#e8e2d2" stroke-width="1.3"/></svg><svg style="left:1169px;top:773px" width="16" height="16" viewBox="0 0 16 16" fill="none" stroke="#fff">
<path d="M1 5.5 H3.5 L7.5 1.5 V14.5 L3.5 10.5 H1Z" stroke-width="1.3" stroke-linejoin="round"/>
<path d="M9.5 5.5 Q11 8 9.5 10.5 M11.5 3.8 Q14 8 11.5 12.2 M13.5 2.2 Q17 8 13.5 13.8" stroke-width="1.1"/></svg><span class="t" id="t149" style="top:766.9px;font-size:12px;color:#fff;left:1233px;transform:translateX(-50%) scaleX(0.8524);letter-spacing:0px;">12:10</span><span class="t" id="t150" style="top:784px;font-size:12px;color:#fff;left:1232.2px;transform:translateX(-50%) scaleX(0.9734);letter-spacing:0px;">01/11/2019</span>
</body></html>
